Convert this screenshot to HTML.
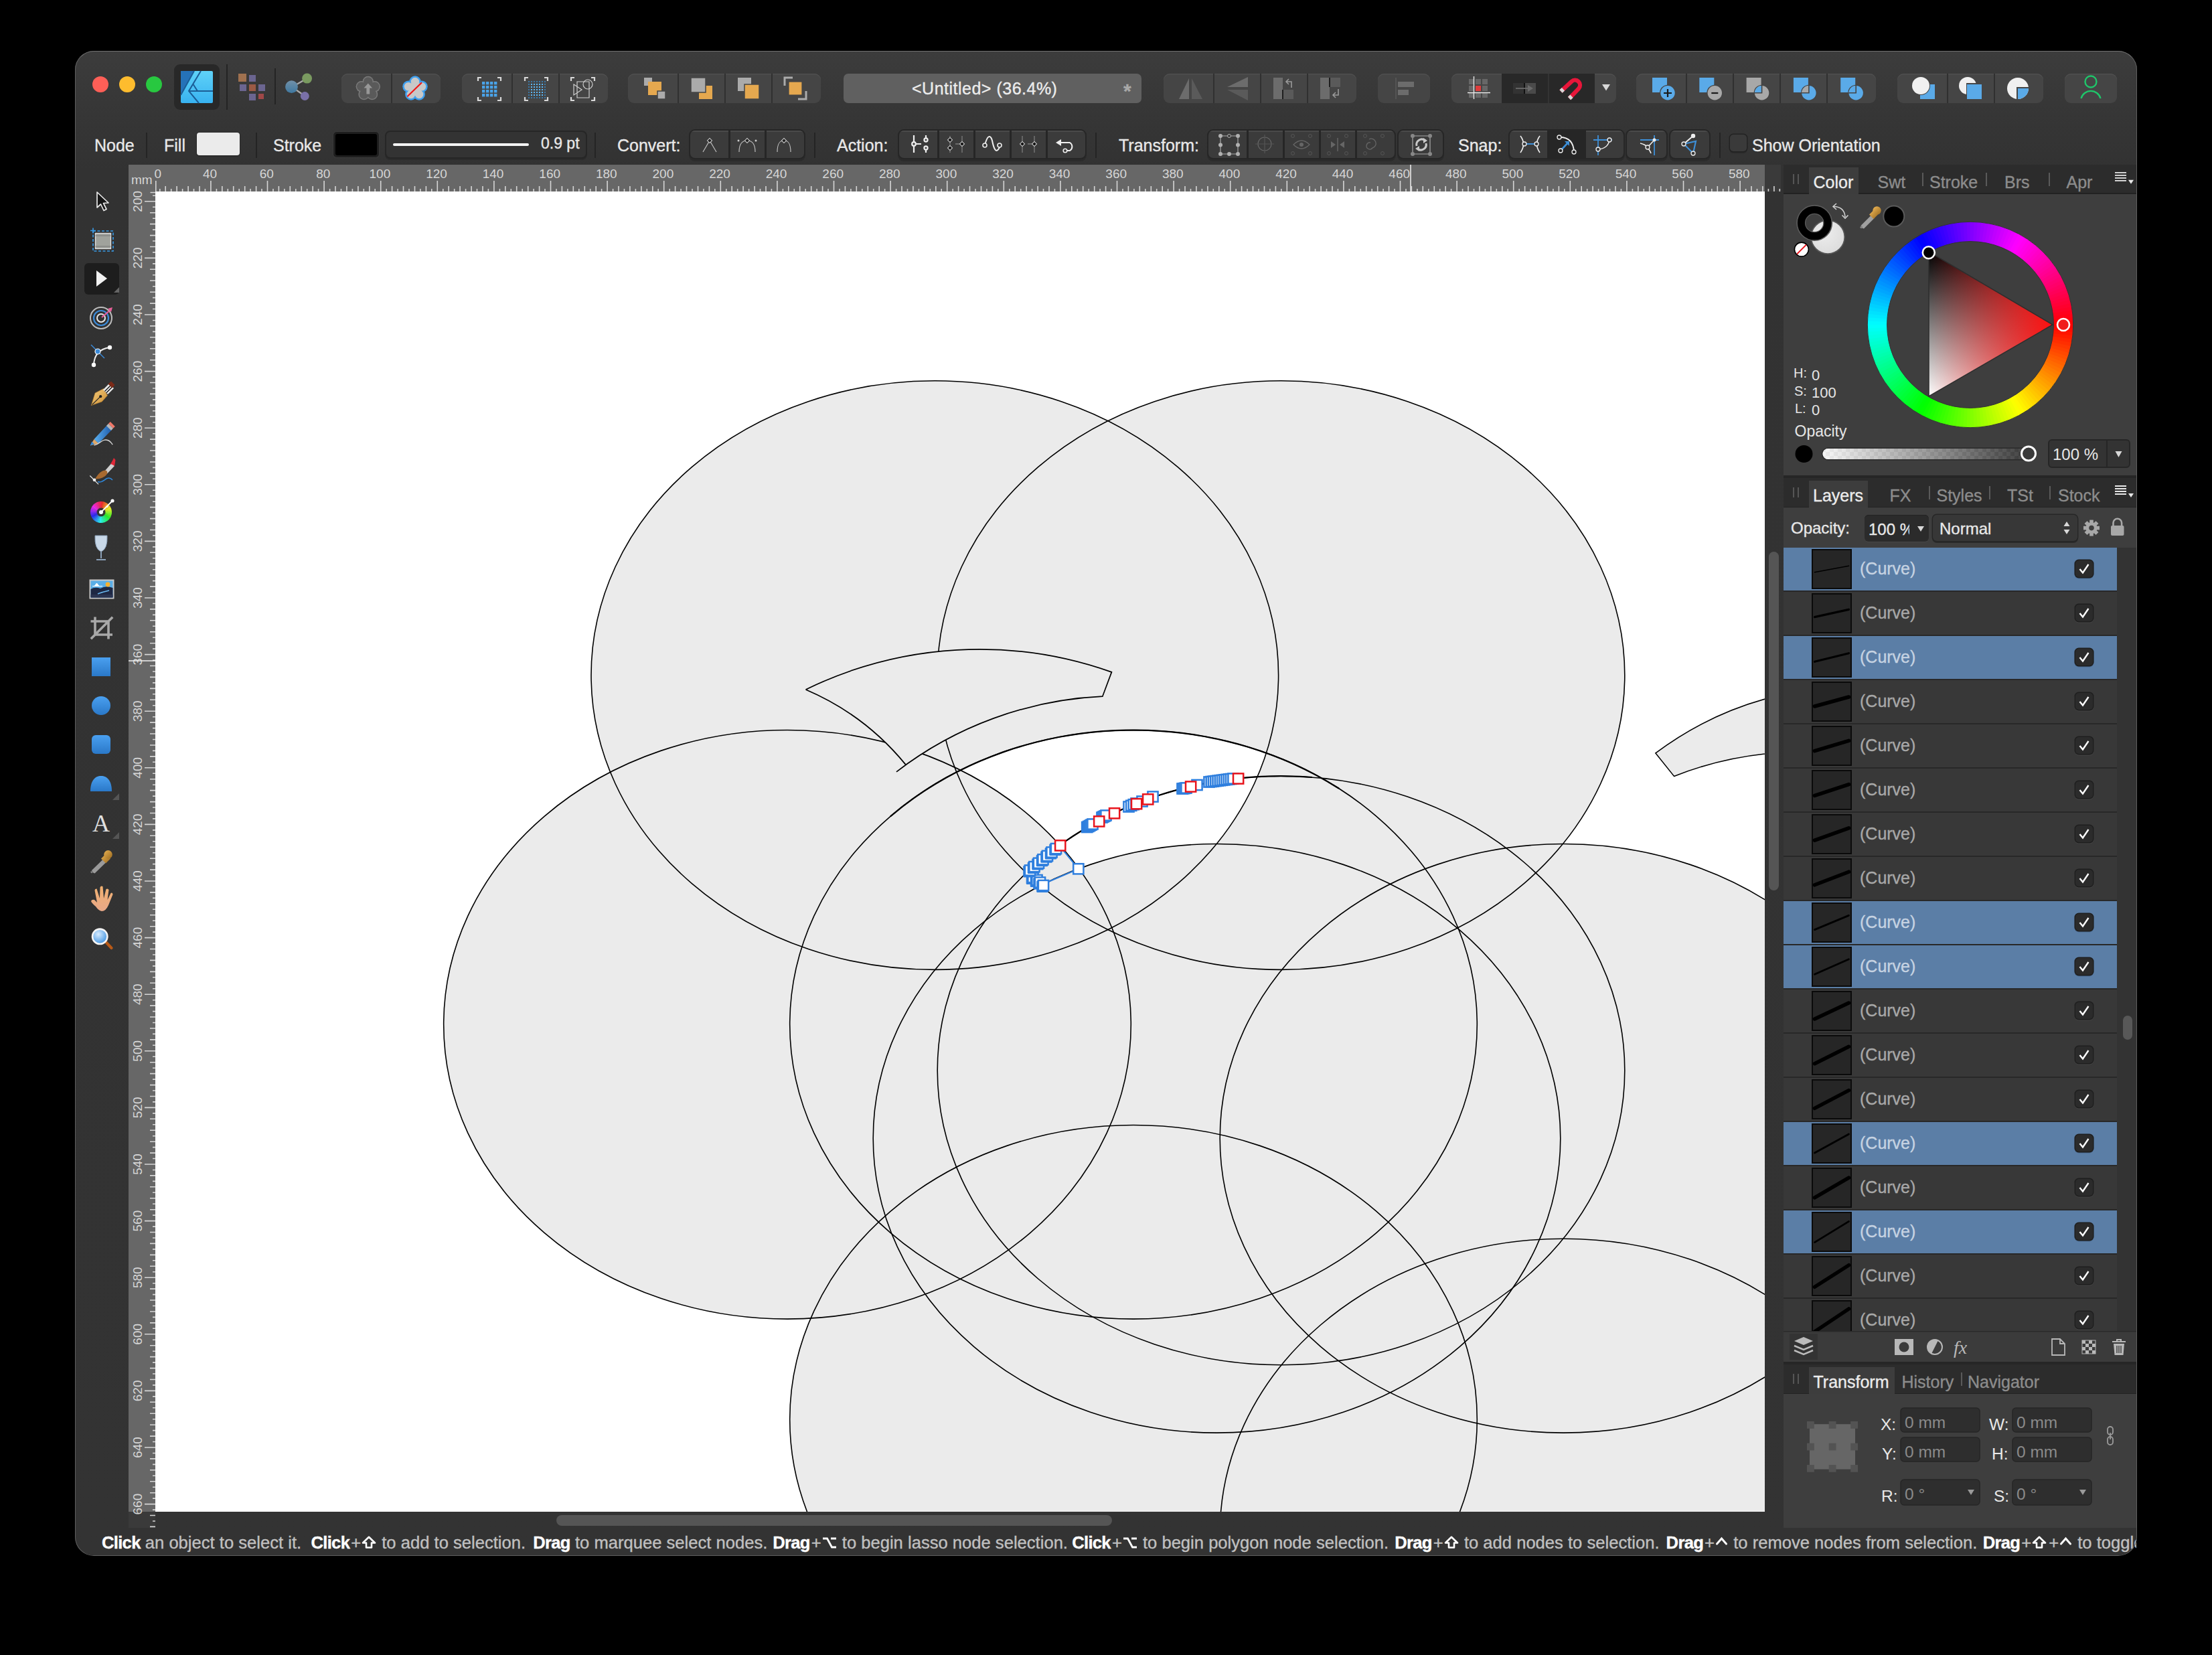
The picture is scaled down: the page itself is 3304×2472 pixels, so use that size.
<!DOCTYPE html>
<html><head><meta charset="utf-8">
<style>
*{box-sizing:border-box;margin:0;padding:0}
html,body{width:3304px;height:2472px;background:#000;overflow:hidden;font-family:"Liberation Sans",sans-serif}
.a{position:absolute}
div.a,div.lbl{-webkit-text-stroke:0.35px currentColor}
svg text{stroke:currentColor;stroke-width:0}

#win{position:absolute;left:112px;top:76px;width:3080px;height:2247px;background:linear-gradient(#3c3c3c 0px,#353535 110px,#323232 180px,#333 2247px);border-radius:28px;overflow:hidden}
#winb{position:absolute;left:112px;top:76px;width:3080px;height:2247px;border-radius:28px;border:1.5px solid #5e5e5e;border-top-color:#707070;height:2248px;pointer-events:none}
.grp{position:absolute;background:#454545;border-radius:9px;top:110px;height:44px;overflow:hidden;box-shadow:inset 0 1.5px 0 #4f4f4f}
.dv{position:absolute;top:0;width:2px;height:100%;background:#303030}
b{color:#fff;font-weight:bold}
.st{top:6px;white-space:nowrap;font-size:25.6px;line-height:32px;color:#c0c0c0}
.st b{letter-spacing:-0.7px}
.pl{margin-left:2px}
.lbl{position:absolute;color:#e8e8e8;font-size:25px;top:202px;line-height:30px;white-space:nowrap}
.sep{position:absolute;width:2px;background:#242424;top:198px;height:38px}
.cg{position:absolute;top:195px;height:41px;background:#3b3b3b;border-radius:7px;box-shadow:0 0 0 2px #262626, 0 3px 0 2px #2b2b2b;overflow:hidden}
.cdv{position:absolute;top:0;width:3px;height:100%;background:#262626}
svg.i{position:absolute;overflow:visible}

</style></head><body>
<div id="win"></div>
<svg class="i" style="left:130px;top:106px" width="120" height="40" viewBox="130 106 120 40"><circle cx="150" cy="126" r="12" fill="#fe5f57"/><circle cx="190" cy="126" r="12" fill="#febc2e"/><circle cx="230" cy="126" r="12" fill="#28c840"/></svg>
<div class="a" style="left:260px;top:96px;width:68px;height:68px;background:#282828;border-radius:9px"></div>
<svg class="i" style="left:270px;top:106px" width="48" height="48" viewBox="270 106 48 48"><defs><linearGradient id="ag" x1="0" y1="0" x2="0" y2="1"><stop offset="0" stop-color="#5fd2f8"/><stop offset="1" stop-color="#38b2f0"/></linearGradient></defs>
    <rect x="270" y="106" width="48" height="48" rx="2" fill="url(#ag)"/>
    <path d="M270,106 L290,106 L270,142 Z" fill="#2572b8"/>
    <path d="M290,106 L270,142 M300,106 L282,136 L297,154 M282,136 L318,136 M288,125 L295,136" stroke="#1b5d96" stroke-width="2" fill="none"/></svg>
<div class="a" style="left:338px;top:96px;width:2px;height:68px;background:#242424"></div>
<svg class="i" style="left:350px;top:105px" width="50" height="50" viewBox="350 105 50 50"><rect x="356" y="110" width="12" height="12" fill="#a0714f"/><rect x="372" y="112" width="10" height="10" fill="#6b6590"/>
    <rect x="358" y="126" width="10" height="10" fill="#6b6590"/><rect x="372" y="126" width="10" height="10" fill="#9b5a45"/><rect x="386" y="126" width="10" height="10" fill="#6b6590"/>
    <rect x="372" y="140" width="10" height="10" fill="#6b6590"/><rect x="386" y="140" width="8" height="8" fill="#a04848"/></svg>
<div class="a" style="left:410px;top:102px;width:2px;height:54px;background:#242424"></div>
<svg class="i" style="left:420px;top:105px" width="50" height="50" viewBox="420 105 50 50"><defs><linearGradient id="sg" x1="0" y1="0" x2="0" y2="1"><stop offset="0" stop-color="#7090a8"/><stop offset="1" stop-color="#3f78a0"/></linearGradient></defs>
    <path d="M436,130 L459,117 M436,130 L455,143" stroke="#a8a8a8" stroke-width="2.5"/>
    <circle cx="435.5" cy="129.7" r="9.4" fill="url(#sg)"/><circle cx="458.6" cy="117.1" r="7.5" fill="#7a9a60"/><circle cx="455.3" cy="143.5" r="6.5" fill="#7a70a8"/></svg>
<div class="grp" style="left:510px;width:148px;top:110px;height:44px;"><div class="dv" style="left:74px"></div></div>
<svg class="i" style="left:525px;top:108px" width="120" height="48" viewBox="525 108 120 48"><circle cx="549.8" cy="122.1" r="8.3" fill="#7a7a7a"/><circle cx="559.7" cy="129.3" r="8.3" fill="#7a7a7a"/><circle cx="555.9" cy="140.9" r="8.3" fill="#7a7a7a"/><circle cx="543.7" cy="140.9" r="8.3" fill="#7a7a7a"/><circle cx="539.9" cy="129.3" r="8.3" fill="#7a7a7a"/><circle cx="549.8" cy="132.5" r="11.9" fill="#7a7a7a"/><circle cx="549.8" cy="122.1" r="6.8" fill="#5a5a5a"/><circle cx="559.7" cy="129.3" r="6.8" fill="#5a5a5a"/><circle cx="555.9" cy="140.9" r="6.8" fill="#5a5a5a"/><circle cx="543.7" cy="140.9" r="6.8" fill="#5a5a5a"/><circle cx="539.9" cy="129.3" r="6.8" fill="#5a5a5a"/><circle cx="549.8" cy="132.5" r="10.4" fill="#5a5a5a"/><path d="M549.8,124.5 L543.5,131.5 L547.4,131.5 L547.4,140.5 L552.2,140.5 L552.2,131.5 L556.1,131.5 Z" fill="#989898"/><circle cx="620.0" cy="122.1" r="8.8" fill="#3ea0f0"/><circle cx="629.9" cy="129.3" r="8.8" fill="#3ea0f0"/><circle cx="626.1" cy="140.9" r="8.8" fill="#3ea0f0"/><circle cx="613.9" cy="140.9" r="8.8" fill="#3ea0f0"/><circle cx="610.1" cy="129.3" r="8.8" fill="#3ea0f0"/><circle cx="620" cy="132.5" r="12.4" fill="#3ea0f0"/><circle cx="620.0" cy="122.1" r="6.3" fill="#c8c8c8"/><circle cx="629.9" cy="129.3" r="6.3" fill="#c8c8c8"/><circle cx="626.1" cy="140.9" r="6.3" fill="#c8c8c8"/><circle cx="613.9" cy="140.9" r="6.3" fill="#c8c8c8"/><circle cx="610.1" cy="129.3" r="6.3" fill="#c8c8c8"/><circle cx="620" cy="132.5" r="9.9" fill="#c8c8c8"/><path d="M608.3,144.2 L630,123.2" stroke="#f01818" stroke-width="2.2"/></svg>
<div class="grp" style="left:690px;width:218px;top:110px;height:44px;"><div class="dv" style="left:74px"></div><div class="dv" style="left:144px"></div></div>
<svg class="i" style="left:700px;top:105px" width="200" height="50" viewBox="700 105 200 50"><rect x="720" y="122" width="4.4" height="4.4" fill="#4aa3e8"/><rect x="726" y="122" width="4.4" height="4.4" fill="#4aa3e8"/><rect x="732" y="122" width="4.4" height="4.4" fill="#4aa3e8"/><rect x="738" y="122" width="4.4" height="4.4" fill="#4aa3e8"/><rect x="720" y="128" width="4.4" height="4.4" fill="#4aa3e8"/><rect x="726" y="128" width="4.4" height="4.4" fill="#4aa3e8"/><rect x="732" y="128" width="4.4" height="4.4" fill="#4aa3e8"/><rect x="738" y="128" width="4.4" height="4.4" fill="#4aa3e8"/><rect x="720" y="134" width="4.4" height="4.4" fill="#4aa3e8"/><rect x="726" y="134" width="4.4" height="4.4" fill="#4aa3e8"/><rect x="732" y="134" width="4.4" height="4.4" fill="#4aa3e8"/><rect x="738" y="134" width="4.4" height="4.4" fill="#4aa3e8"/><rect x="720" y="140" width="4.4" height="4.4" fill="#4aa3e8"/><rect x="726" y="140" width="4.4" height="4.4" fill="#4aa3e8"/><rect x="732" y="140" width="4.4" height="4.4" fill="#4aa3e8"/><rect x="738" y="140" width="4.4" height="4.4" fill="#4aa3e8"/><path d="M714,121 L714,116 L719,116" stroke="#d8d8d8" stroke-width="2.2" fill="none"/><path d="M748,121 L748,116 L743,116" stroke="#d8d8d8" stroke-width="2.2" fill="none"/><path d="M714,145 L714,150 L719,150" stroke="#d8d8d8" stroke-width="2.2" fill="none"/><path d="M748,145 L748,150 L743,150" stroke="#d8d8d8" stroke-width="2.2" fill="none"/><path d="M784,121 L784,116 L789,116" stroke="#d8d8d8" stroke-width="2.2" fill="none"/><path d="M818,121 L818,116 L813,116" stroke="#d8d8d8" stroke-width="2.2" fill="none"/><path d="M784,145 L784,150 L789,150" stroke="#d8d8d8" stroke-width="2.2" fill="none"/><path d="M818,145 L818,150 L813,150" stroke="#d8d8d8" stroke-width="2.2" fill="none"/><path d="M853,121 L853,116 L858,116" stroke="#d8d8d8" stroke-width="2.2" fill="none"/><path d="M888,121 L888,116 L883,116" stroke="#d8d8d8" stroke-width="2.2" fill="none"/><path d="M853,145 L853,150 L858,150" stroke="#d8d8d8" stroke-width="2.2" fill="none"/><path d="M888,145 L888,150 L883,150" stroke="#d8d8d8" stroke-width="2.2" fill="none"/><rect x="789" y="121" width="2" height="2" fill="#3a78a8"/><rect x="793" y="121" width="2" height="2" fill="#3a78a8"/><rect x="797" y="121" width="2" height="2" fill="#3a78a8"/><rect x="801" y="121" width="2" height="2" fill="#3a78a8"/><rect x="805" y="121" width="2" height="2" fill="#3a78a8"/><rect x="809" y="121" width="2" height="2" fill="#3a78a8"/><rect x="813" y="121" width="2" height="2" fill="#3a78a8"/><rect x="789" y="125" width="2" height="2" fill="#3a78a8"/><rect x="793" y="125" width="2" height="2" fill="#5ab8f8"/><rect x="797" y="125" width="2" height="2" fill="#5ab8f8"/><rect x="801" y="125" width="2" height="2" fill="#5ab8f8"/><rect x="805" y="125" width="2" height="2" fill="#5ab8f8"/><rect x="809" y="125" width="2" height="2" fill="#5ab8f8"/><rect x="813" y="125" width="2" height="2" fill="#3a78a8"/><rect x="789" y="129" width="2" height="2" fill="#3a78a8"/><rect x="793" y="129" width="2" height="2" fill="#5ab8f8"/><rect x="797" y="129" width="2" height="2" fill="#5ab8f8"/><rect x="801" y="129" width="2" height="2" fill="#5ab8f8"/><rect x="805" y="129" width="2" height="2" fill="#5ab8f8"/><rect x="809" y="129" width="2" height="2" fill="#5ab8f8"/><rect x="813" y="129" width="2" height="2" fill="#3a78a8"/><rect x="789" y="133" width="2" height="2" fill="#3a78a8"/><rect x="793" y="133" width="2" height="2" fill="#5ab8f8"/><rect x="797" y="133" width="2" height="2" fill="#5ab8f8"/><rect x="801" y="133" width="2" height="2" fill="#5ab8f8"/><rect x="805" y="133" width="2" height="2" fill="#5ab8f8"/><rect x="809" y="133" width="2" height="2" fill="#5ab8f8"/><rect x="813" y="133" width="2" height="2" fill="#3a78a8"/><rect x="789" y="137" width="2" height="2" fill="#3a78a8"/><rect x="793" y="137" width="2" height="2" fill="#5ab8f8"/><rect x="797" y="137" width="2" height="2" fill="#5ab8f8"/><rect x="801" y="137" width="2" height="2" fill="#5ab8f8"/><rect x="805" y="137" width="2" height="2" fill="#5ab8f8"/><rect x="809" y="137" width="2" height="2" fill="#5ab8f8"/><rect x="813" y="137" width="2" height="2" fill="#3a78a8"/><rect x="789" y="141" width="2" height="2" fill="#3a78a8"/><rect x="793" y="141" width="2" height="2" fill="#5ab8f8"/><rect x="797" y="141" width="2" height="2" fill="#5ab8f8"/><rect x="801" y="141" width="2" height="2" fill="#5ab8f8"/><rect x="805" y="141" width="2" height="2" fill="#5ab8f8"/><rect x="809" y="141" width="2" height="2" fill="#5ab8f8"/><rect x="813" y="141" width="2" height="2" fill="#3a78a8"/><rect x="789" y="145" width="2" height="2" fill="#3a78a8"/><rect x="793" y="145" width="2" height="2" fill="#3a78a8"/><rect x="797" y="145" width="2" height="2" fill="#3a78a8"/><rect x="801" y="145" width="2" height="2" fill="#3a78a8"/><rect x="805" y="145" width="2" height="2" fill="#3a78a8"/><rect x="809" y="145" width="2" height="2" fill="#3a78a8"/><rect x="813" y="145" width="2" height="2" fill="#3a78a8"/><path d="M857,126 L869,134 L857,142 Z M862,122 h18 v24 h-18 Z" stroke="#cfcfcf" stroke-width="1.2" fill="none"/><circle cx="878" cy="126" r="7" stroke="#cfcfcf" stroke-width="1.2" fill="none"/></svg>
<div class="grp" style="left:938px;width:288px;top:110px;height:44px;"><div class="dv" style="left:74px"></div><div class="dv" style="left:144px"></div><div class="dv" style="left:214px"></div></div>
<svg class="i" style="left:950px;top:105px" width="270" height="50" viewBox="950 105 270 50"><rect x="962" y="116" width="12" height="12" fill="#ababab"/><rect x="968" y="122" width="20" height="20" fill="#e5a84f"/><rect x="982" y="136" width="12" height="12" fill="#ababab" stroke="#454545" stroke-width="1.5"/>
    <rect x="1044" y="128" width="20" height="20" fill="#e5a84f"/><rect x="1032" y="116" width="22" height="22" fill="#ababab" stroke="#454545" stroke-width="1.5"/>
    <rect x="1102" y="116" width="20" height="20" fill="#ababab"/><rect x="1112" y="126" width="22" height="22" fill="#e5a84f" stroke="#454545" stroke-width="1.5"/>
    <path d="M1172,128 v-12 h12" stroke="#ababab" stroke-width="3" fill="none"/><path d="M1204,136 v12 h-12" stroke="#ababab" stroke-width="3" fill="none"/><rect x="1178" y="122" width="20" height="20" fill="#e5a84f" stroke="#454545" stroke-width="1.2"/></svg>
<div class="a" style="left:1260px;top:110px;width:445px;height:44px;background:#606060;border-radius:7px"></div>
<div class="a" style="left:1362px;top:110px;height:44px;line-height:44px;color:#ececec;font-size:25px;letter-spacing:0.5px;white-space:nowrap">&lt;Untitled&gt; (36.4%)</div>
<div class="a" style="left:1678px;top:117px;width:20px;height:30px;color:#a8a8a8;font-size:30px;font-weight:bold;line-height:38px">*</div>
<div class="grp" style="left:1738px;width:288px;top:110px;height:44px;"><div class="dv" style="left:74px"></div><div class="dv" style="left:144px"></div><div class="dv" style="left:214px"></div></div>
<svg class="i" style="left:1750px;top:105px" width="270" height="50" viewBox="1750 105 270 50"><path d="M1776,117 L1776,148 L1761,148 Z" fill="#6c6c6c"/><path d="M1780,117 L1780,148 L1796,148 Z" fill="#5a5a5a"/>
    <path d="M1864,115 L1864,130 L1833,130 Z" fill="#6c6c6c"/><path d="M1864,134 L1864,150 L1833,134 Z" fill="#5a5a5a"/>
    <rect x="1902" y="116" width="14" height="32" fill="#6c6c6c"/><rect x="1916" y="134" width="16" height="14" fill="#5a5a5a"/><path d="M1916,134 v14" stroke="#1e1e1e" stroke-width="2"/><path d="M1929,131 v-9 h-7 M1925,118 l-4,4 l4,4" stroke="#9a9a9a" stroke-width="1.6" fill="none"/>
    <rect x="1972" y="116" width="14" height="32" fill="#6c6c6c"/><rect x="1986" y="116" width="16" height="14" fill="#5a5a5a"/><path d="M1986,116 v14" stroke="#1e1e1e" stroke-width="2"/><path d="M1999,133 v9 h-7 M1995,138 l-4,4 l4,4" stroke="#9a9a9a" stroke-width="1.6" fill="none"/></svg>
<div class="grp" style="left:2058px;width:78px;top:110px;height:44px;"></div>
<svg class="i" style="left:2080px;top:110px" width="40" height="40" viewBox="2080 110 40 40"><path d="M2085,116 v32" stroke="#5a5a5a" stroke-width="1.5"/><rect x="2088" y="122" width="24" height="8" fill="#6c6c6c"/><rect x="2088" y="134" width="16" height="8" fill="#6c6c6c"/></svg>
<div class="grp" style="left:2168px;width:246px;top:110px;height:44px;"></div>
<div class="a" style="left:2243px;top:110px;width:139px;height:44px;background:#282828"></div><div class="a" style="left:2312px;top:110px;width:2px;height:44px;background:#333"></div>
<svg class="i" style="left:2180px;top:105px" width="240" height="50" viewBox="2180 105 240 50"><rect x="2194" y="118" width="8" height="8" fill="#676767"/><rect x="2204" y="118" width="8" height="8" fill="#676767"/><rect x="2214" y="118" width="8" height="8" fill="#676767"/><rect x="2194" y="128" width="8" height="8" fill="#676767"/><rect x="2204" y="128" width="8" height="8" fill="#e03c3c"/><rect x="2214" y="128" width="8" height="8" fill="#676767"/><rect x="2194" y="138" width="8" height="8" fill="#676767"/><rect x="2204" y="138" width="8" height="8" fill="#676767"/><rect x="2214" y="138" width="8" height="8" fill="#676767"/><path d="M2201.5,114 v34 M2192,138.5 h34" stroke="#e8e8e8" stroke-width="1.4"/><rect x="2260" y="124" width="16" height="16" fill="#333"/><rect x="2278" y="124" width="16" height="16" fill="#4a4a4a"/><path d="M2277,124 v16" stroke="#111" stroke-width="2"/><path d="M2264,132 h18" stroke="#6a6a6a" stroke-width="1.8"/><path d="M2282,127 l8,5 l-8,5 Z" fill="#6a6a6a"/><path d="M2331.5,136.5 L2347.4,121.7 A7.5,7.5 0 0 1 2358,132.3 L2344,147" stroke="#e8163a" stroke-width="6.2" fill="none"/><path d="M2331.5,136.5 L2335,133.2 M2344,147 L2347.5,143.7" stroke="#d8d8d8" stroke-width="6.2"/><path d="M2393,126 h12 l-6,9.5 Z" fill="#d8d8d8"/></svg>
<div class="grp" style="left:2444px;width:358px;top:110px;height:44px;"><div class="dv" style="left:74px"></div><div class="dv" style="left:144px"></div><div class="dv" style="left:214px"></div><div class="dv" style="left:284px"></div></div>
<svg class="i" style="left:2450px;top:105px" width="350" height="50" viewBox="2450 105 350 50"><rect x="2468.0" y="116" width="22" height="22" fill="#5aaae8"/><circle cx="2491.0" cy="138.8" r="12" fill="#454545"/><circle cx="2491.0" cy="138.8" r="10.7" fill="#5aaae8"/><path d="M2485.0,139 h12 M2491.0,133 v12" stroke="#1a1a1a" stroke-width="2.2"/><rect x="2538.3" y="116" width="22" height="22" fill="#5aaae8"/><circle cx="2561.3" cy="138.8" r="12" fill="#454545"/><circle cx="2561.3" cy="138.8" r="10.7" fill="#a8a8a8"/><path d="M2556.3,139 h10" stroke="#1a1a1a" stroke-width="2.2"/><rect x="2608.6" y="116" width="22" height="22" fill="#a8a8a8"/><circle cx="2631.6" cy="138.8" r="12" fill="#454545"/><circle cx="2631.6" cy="138.8" r="10.7" fill="#a8a8a8"/><path d="M2620.9,138.8 A10.7,10.7 0 0 1 2631.6,128.1 L2631.6,138.8 Z" fill="#5aaae8"/><path d="M2620.6,138.8 h11 v-11" stroke="#454545" stroke-width="1.6" fill="none"/><rect x="2678.9" y="116" width="22" height="22" fill="#5aaae8"/><circle cx="2701.9" cy="138.8" r="12" fill="#454545"/><circle cx="2701.9" cy="138.8" r="10.7" fill="#5aaae8"/><path d="M2691.2,138.8 A10.7,10.7 0 0 1 2701.9,128.1 L2701.9,138.8 Z" fill="#a8a8a8"/><path d="M2690.9,138.8 h11 v-11" stroke="#454545" stroke-width="1.6" fill="none"/><rect x="2749.2" y="116" width="22" height="22" fill="#5aaae8"/><circle cx="2772.2" cy="138.8" r="12" fill="#454545"/><circle cx="2772.2" cy="138.8" r="10.7" fill="#5aaae8"/><path d="M2761.5,138.8 A10.7,10.7 0 0 1 2772.2,128.1 L2772.2,138.8 Z" fill="#5aaae8"/><path d="M2761.2,138.8 h11 v-11" stroke="#454545" stroke-width="1.6" fill="none"/></svg>
<div class="grp" style="left:2834px;width:218px;top:110px;height:44px;"><div class="dv" style="left:74px"></div><div class="dv" style="left:144px"></div></div>
<svg class="i" style="left:2850px;top:105px" width="200" height="50" viewBox="2850 105 200 50"><rect x="2868" y="126" width="22" height="22" fill="#5aaae8"/><circle cx="2869" cy="128" r="14" fill="#454545"/><circle cx="2869" cy="128" r="13" fill="#f0f0f0"/>
    <circle cx="2939" cy="128" r="13" fill="#f0f0f0"/><rect x="2937" y="124" width="26" height="26" fill="#454545"/><rect x="2938" y="126" width="22" height="22" fill="#5aaae8"/>
    <circle cx="3014" cy="132" r="16" fill="#f0f0f0"/><path d="M3013,148 L3013,131 L3030,131 A16,16 0 0 1 3013,148 Z" fill="#5aaae8"/><path d="M3013,148 V131 H3030" stroke="#454545" stroke-width="2" fill="none"/></svg>
<div class="grp" style="left:3084px;width:78px;top:110px;height:44px;"></div>
<svg class="i" style="left:3100px;top:110px" width="50" height="44" viewBox="3100 110 50 44"><circle cx="3123" cy="122" r="8.5" stroke="#1fc66a" stroke-width="2.4" fill="none"/><path d="M3108.5,147 A15,15 0 0 1 3137.5,147" stroke="#1fc66a" stroke-width="2.4" fill="none"/></svg><div class="lbl" style="left:141px;top:202px">Node</div>
<div class="sep" style="left:218px"></div>
<div class="lbl" style="left:245px;top:202px">Fill</div>
<div class="a" style="left:293px;top:197px;width:66px;height:37px;background:#2a2a2a;border-radius:5px"></div><div class="a" style="left:294px;top:198px;width:64px;height:34px;background:#ebebeb;border-radius:4px"></div>
<div class="sep" style="left:382px"></div>
<div class="lbl" style="left:408px;top:202px">Stroke</div>
<div class="a" style="left:498px;top:197px;width:68px;height:38px;background:#1e1e1e;border-radius:5px;box-shadow:0 0 0 1px #3a3a3a"></div><div class="a" style="left:501px;top:200px;width:62px;height:32px;background:#000;border-radius:3px"></div>
<div class="a" style="left:577px;top:197px;width:298px;height:38px;background:#333;border-radius:6px;box-shadow:0 0 0 2px #262626, 0 2px 0 2px #2b2b2b"></div>
<div class="a" style="left:587px;top:213.5px;width:203px;height:4px;background:#f4f4f4;border-radius:2px"></div>
<div class="lbl" style="left:808px;top:199px;font-size:23px">0.9 pt</div>
<div class="sep" style="left:888px"></div>
<div class="lbl" style="left:922px;top:202px">Convert:</div>
<div class="cg" style="left:1031px;width:170px"><div class="a" style="left:0;right:0;top:0;height:1.5px;background:#4a4a4a"></div><div class="cdv" style="left:56.5px"></div><div class="cdv" style="left:110.5px"></div></div>
<svg class="i" style="left:1040px;top:200px" width="150" height="32" viewBox="1040 200 150 32"><path d="M1050,227 L1060,210 L1070,227" stroke="#bdbdbd" stroke-width="1.2" fill="none"/><rect x="1057.5" y="207.5" width="5" height="5" transform="rotate(45 1060 210)" fill="#222" stroke="#ccc" stroke-width="1"/>
    <path d="M1104,227 C1104,215 1108,210 1116,210 C1124,210 1128,215 1128,227" stroke="#bdbdbd" stroke-width="1.2" fill="none"/><rect x="1113.5" y="207.5" width="5" height="5" transform="rotate(45 1116 210)" fill="#222" stroke="#ccc" stroke-width="1"/><circle cx="1103" cy="210" r="1.5" fill="#ccc"/><circle cx="1129" cy="210" r="1.5" fill="#ccc"/>
    <path d="M1161,227 C1161,215 1164,210 1171,210 C1178,210 1181,215 1181,227" stroke="#bdbdbd" stroke-width="1.2" fill="none"/><rect x="1168.5" y="207.5" width="5" height="5" transform="rotate(45 1171 210)" fill="#222" stroke="#ccc" stroke-width="1"/></svg>
<div class="sep" style="left:1216px"></div>
<div class="lbl" style="left:1250px;top:202px">Action:</div>
<div class="cg" style="left:1343px;width:278px"><div class="a" style="left:0;right:0;top:0;height:1.5px;background:#4a4a4a"></div><div class="cdv" style="left:56.5px"></div><div class="cdv" style="left:110.5px"></div><div class="cdv" style="left:164.5px"></div><div class="cdv" style="left:218.5px"></div></div>
<svg class="i" style="left:1350px;top:198px" width="270" height="36" viewBox="1350 198 270 36"><g stroke="#eee" stroke-width="2.2" fill="none"><path d="M1365,202 v26 M1365,215 h11"/><circle cx="1365" cy="215" r="2.8" fill="#3b3b3b"/><path d="M1383,202 v5 M1383,228 v-5"/><circle cx="1383" cy="209" r="2.6" fill="#3b3b3b"/><circle cx="1383" cy="221" r="2.6" fill="#3b3b3b"/></g>
    <g stroke="#6a6a6a" stroke-width="1.8" fill="none"><path d="M1419,203 v25 M1437,203 v25 M1427,215 h10"/></g><g fill="#111" stroke="#ccc" stroke-width="1"><rect x="1416.5" y="206.5" width="5" height="5" transform="rotate(45 1419 209)"/><rect x="1416.5" y="218.5" width="5" height="5" transform="rotate(45 1419 221)"/><rect x="1434.5" y="212.5" width="5" height="5" transform="rotate(45 1437 215)"/></g>
    <path d="M1471,217 C1475,200 1480,202 1482,210 C1484,220 1487,230 1492,222 L1494,217" stroke="#eee" stroke-width="2" fill="none"/><circle cx="1471" cy="217" r="3" stroke="#eee" stroke-width="1.6" fill="#3b3b3b"/><circle cx="1493" cy="217" r="3" stroke="#eee" stroke-width="1.6" fill="#3b3b3b"/>
    <g stroke="#6a6a6a" stroke-width="1.8" fill="none"><path d="M1527,203 v25 M1545,203 v25 M1535,215 h10"/></g><g fill="#111" stroke="#ccc" stroke-width="1"><rect x="1524.5" y="212.5" width="5" height="5" transform="rotate(45 1527 215)"/><rect x="1542.5" y="212.5" width="5" height="5" transform="rotate(45 1545 215)"/></g>
    <path d="M1584,213 h14 a7,7 0 0 1 0,12 h-6" stroke="#eee" stroke-width="2" fill="none"/><path d="M1577,213 l8,-5 v10 Z" fill="#eee"/><circle cx="1591" cy="225" r="2.8" stroke="#eee" stroke-width="1.6" fill="#3b3b3b"/></svg>
<div class="sep" style="left:1636px"></div>
<div class="lbl" style="left:1671px;top:202px">Transform:</div>
<div class="cg" style="left:1805px;width:278px"><div class="a" style="left:0;right:0;top:0;height:1.5px;background:#4a4a4a"></div><div class="cdv" style="left:56.5px"></div><div class="cdv" style="left:110.5px"></div><div class="cdv" style="left:164.5px"></div><div class="cdv" style="left:218.5px"></div></div>
<div class="cg" style="left:2089px;width:66px"><div class="a" style="left:0;right:0;top:0;height:1.5px;background:#4a4a4a"></div></div>
<svg class="i" style="left:1815px;top:196px" width="330" height="40" viewBox="1815 196 330 40"><path d="M1823,203 h26 v27 h-26 Z" stroke="#aaa" stroke-width="1.2" fill="none"/><g fill="#b0b0b0"><circle cx="1823" cy="203" r="3"/><circle cx="1849" cy="203" r="3"/><circle cx="1823" cy="216.5" r="3"/><circle cx="1849" cy="216.5" r="3"/><circle cx="1823" cy="230" r="3"/><circle cx="1836" cy="230" r="3"/><circle cx="1849" cy="230" r="3"/></g><circle cx="1836" cy="203" r="2.5" fill="#3b3b3b" stroke="#b0b0b0" stroke-width="1"/>
    <circle cx="1889" cy="215" r="10" stroke="#666" stroke-width="1.2" fill="none"/><path d="M1875,215 h28 M1889,201 v28" stroke="#555" stroke-width="1.2"/>
    <g stroke="#555" stroke-width="1" fill="none"><circle cx="1931" cy="203" r="2.5"/><circle cx="1957" cy="203" r="2.5"/><circle cx="1931" cy="229" r="2.5"/><circle cx="1957" cy="229" r="2.5"/></g><path d="M1932,216 Q1944,204 1956,216 Q1944,228 1932,216 Z" stroke="#666" stroke-width="1.2" fill="none"/><circle cx="1944" cy="216" r="3" fill="#666"/>
    <g stroke="#555" stroke-width="1" fill="none"><circle cx="1985" cy="203" r="2.5"/><circle cx="2011" cy="203" r="2.5"/><circle cx="1985" cy="229" r="2.5"/><circle cx="2011" cy="229" r="2.5"/></g><path d="M1998,206 v20" stroke="#666" stroke-width="1.5"/><path d="M1988,211 l7,5 l-7,5 Z M2008,211 l-7,5 l7,5 Z" fill="#666"/>
    <g stroke="#555" stroke-width="1" fill="none"><circle cx="2039" cy="203" r="2.5"/><circle cx="2065" cy="203" r="2.5"/><circle cx="2039" cy="229" r="2.5"/><circle cx="2065" cy="229" r="2.5"/></g><path d="M2045,208 a7,7 0 1 1 5,13 a5,5 0 1 1 -3,-8" stroke="#666" stroke-width="1.3" fill="none"/>
    <path d="M2110,203 h26 v27 h-26 Z" stroke="#aaa" stroke-width="1.2" fill="none"/><g fill="#888"><circle cx="2110" cy="203" r="3"/><circle cx="2136" cy="203" r="3"/><circle cx="2110" cy="230" r="3"/><circle cx="2136" cy="230" r="3"/></g><path d="M2116,218 a8,8 0 0 1 13,-8 M2130,214 a8,8 0 0 1 -13,8" stroke="#c8c8c8" stroke-width="3" fill="none"/><path d="M2126,206 l6,4 l-6,4 Z M2120,218 l-6,4 l6,4 Z" fill="#c8c8c8"/></svg>
<div class="lbl" style="left:2178px;top:202px">Snap:</div>
<div class="cg" style="left:2255px;width:170px"><div class="a" style="left:0;right:0;top:0;height:1.5px;background:#4a4a4a"></div><div class="a" style="left:57px;width:56px;top:0;height:100%;background:#262626"></div><div class="cdv" style="left:55.5px"></div><div class="cdv" style="left:110.5px"></div></div>
<div class="cg" style="left:2430px;width:59px"><div class="a" style="left:0;right:0;top:0;height:1.5px;background:#4a4a4a"></div></div>
<div class="cg" style="left:2495px;width:58px"><div class="a" style="left:0;right:0;top:0;height:1.5px;background:#4a4a4a"></div></div>
<svg class="i" style="left:2260px;top:196px" width="300" height="40" viewBox="2260 196 300 40"><path d="M2271,203 Q2280,215 2271,228 M2300,203 Q2291,215 2300,228" stroke="#eee" stroke-width="1.6" fill="none"/><path d="M2277,215 h17" stroke="#3d8fd8" stroke-width="2"/><circle cx="2277" cy="215" r="3" fill="#3b3b3b" stroke="#eee" stroke-width="1.3"/><circle cx="2295" cy="215" r="3" fill="#3b3b3b" stroke="#eee" stroke-width="1.3"/>
    <path d="M2330,205 Q2350,205 2351,227" stroke="#eee" stroke-width="1.8" fill="none"/><path d="M2331,225 L2343,212" stroke="#3d8fd8" stroke-width="2.6"/><path d="M2337,211 h7 v7 Z" fill="#3d8fd8"/><circle cx="2329" cy="205" r="3" fill="#262626" stroke="#eee" stroke-width="1.3"/><circle cx="2331" cy="225" r="3" fill="#262626" stroke="#eee" stroke-width="1.3"/><circle cx="2351" cy="227" r="3" fill="#262626" stroke="#eee" stroke-width="1.3"/>
    <path d="M2380,209 h28 M2387,202 v30" stroke="#3d8fd8" stroke-width="1.8"/><path d="M2387,223 Q2402,222 2404,209" stroke="#eee" stroke-width="1.6" fill="none"/><circle cx="2387" cy="223" r="3" fill="#3b3b3b" stroke="#eee" stroke-width="1.3"/><circle cx="2404" cy="209" r="3" fill="#3b3b3b" stroke="#eee" stroke-width="1.3"/>
    <path d="M2450,209 h28 M2471,202 v30" stroke="#3d8fd8" stroke-width="1.8"/><path d="M2450,214 Q2458,216 2461,220 L2471,209 M2461,220 Q2465,226 2466,229" stroke="#eee" stroke-width="1.6" fill="none"/><circle cx="2461" cy="220" r="3" fill="#3b3b3b" stroke="#eee" stroke-width="1.3"/><circle cx="2471" cy="209" r="2.5" fill="#eee"/>
    <path d="M2515,215 L2533,211 L2529,229 Z" stroke="#3d8fd8" stroke-width="2.2" fill="none"/><path d="M2515,215 L2529,203" stroke="#eee" stroke-width="2"/><circle cx="2529" cy="203" r="3.2" fill="#eee"/><circle cx="2515" cy="215" r="3" fill="#3b3b3b" stroke="#eee" stroke-width="1.3"/><circle cx="2529" cy="229" r="3" fill="#3b3b3b" stroke="#eee" stroke-width="1.3"/></svg>
<div class="sep" style="left:2568px"></div>
<div class="a" style="left:2584px;top:201px;width:25px;height:25px;background:#3a3a3a;border-radius:5px;box-shadow:0 0 0 1.5px #222, 0 2px 0 1px #2a2a2a"></div>
<div class="lbl" style="left:2617px;top:202px">Show Orientation</div><div class="a" style="left:192px;top:246px;width:2444px;height:40px;background:#676767"></div>
<div class="a" style="left:192px;top:286px;width:40px;height:1972px;background:#676767"></div>
<div class="a" style="left:192px;top:2258px;width:40px;height:24px;background:#3a3a3a"></div><div class="a" style="left:2636px;top:246px;width:24px;height:40px;background:#3a3a3a"></div>
<svg class="a" style="left:0;top:0" width="3304" height="2472" viewBox="0 0 3304 2472"><defs><clipPath id="rc"><rect x="192" y="246" width="2468" height="2036"/></clipPath></defs><g clip-path="url(#rc)"><path d="M238.8,282 V286 M247.2,278 V286 M255.7,282 V286 M264.1,278 V286 M272.6,282 V286 M281.1,278 V286 M289.5,282 V286 M298.0,278 V286 M306.4,282 V286 M314.9,270 V286 M323.4,282 V286 M331.8,278 V286 M340.3,282 V286 M348.7,278 V286 M357.2,282 V286 M365.7,278 V286 M374.1,282 V286 M382.6,278 V286 M391.0,282 V286 M399.5,270 V286 M408.0,282 V286 M416.4,278 V286 M424.9,282 V286 M433.3,278 V286 M441.8,282 V286 M450.3,278 V286 M458.7,282 V286 M467.2,278 V286 M475.6,282 V286 M484.1,270 V286 M492.6,282 V286 M501.0,278 V286 M509.5,282 V286 M517.9,278 V286 M526.4,282 V286 M534.9,278 V286 M543.3,282 V286 M551.8,278 V286 M560.2,282 V286 M568.7,270 V286 M577.2,282 V286 M585.6,278 V286 M594.1,282 V286 M602.5,278 V286 M611.0,282 V286 M619.5,278 V286 M627.9,282 V286 M636.4,278 V286 M644.8,282 V286 M653.3,270 V286 M661.8,282 V286 M670.2,278 V286 M678.7,282 V286 M687.1,278 V286 M695.6,282 V286 M704.1,278 V286 M712.5,282 V286 M721.0,278 V286 M729.4,282 V286 M737.9,270 V286 M746.4,282 V286 M754.8,278 V286 M763.3,282 V286 M771.7,278 V286 M780.2,282 V286 M788.7,278 V286 M797.1,282 V286 M805.6,278 V286 M814.0,282 V286 M822.5,270 V286 M831.0,282 V286 M839.4,278 V286 M847.9,282 V286 M856.3,278 V286 M864.8,282 V286 M873.3,278 V286 M881.7,282 V286 M890.2,278 V286 M898.6,282 V286 M907.1,270 V286 M915.6,282 V286 M924.0,278 V286 M932.5,282 V286 M940.9,278 V286 M949.4,282 V286 M957.9,278 V286 M966.3,282 V286 M974.8,278 V286 M983.2,282 V286 M991.7,270 V286 M1000.2,282 V286 M1008.6,278 V286 M1017.1,282 V286 M1025.5,278 V286 M1034.0,282 V286 M1042.5,278 V286 M1050.9,282 V286 M1059.4,278 V286 M1067.8,282 V286 M1076.3,270 V286 M1084.8,282 V286 M1093.2,278 V286 M1101.7,282 V286 M1110.1,278 V286 M1118.6,282 V286 M1127.1,278 V286 M1135.5,282 V286 M1144.0,278 V286 M1152.4,282 V286 M1160.9,270 V286 M1169.4,282 V286 M1177.8,278 V286 M1186.3,282 V286 M1194.7,278 V286 M1203.2,282 V286 M1211.7,278 V286 M1220.1,282 V286 M1228.6,278 V286 M1237.0,282 V286 M1245.5,270 V286 M1254.0,282 V286 M1262.4,278 V286 M1270.9,282 V286 M1279.3,278 V286 M1287.8,282 V286 M1296.3,278 V286 M1304.7,282 V286 M1313.2,278 V286 M1321.6,282 V286 M1330.1,270 V286 M1338.6,282 V286 M1347.0,278 V286 M1355.5,282 V286 M1363.9,278 V286 M1372.4,282 V286 M1380.9,278 V286 M1389.3,282 V286 M1397.8,278 V286 M1406.2,282 V286 M1414.7,270 V286 M1423.2,282 V286 M1431.6,278 V286 M1440.1,282 V286 M1448.5,278 V286 M1457.0,282 V286 M1465.5,278 V286 M1473.9,282 V286 M1482.4,278 V286 M1490.8,282 V286 M1499.3,270 V286 M1507.8,282 V286 M1516.2,278 V286 M1524.7,282 V286 M1533.1,278 V286 M1541.6,282 V286 M1550.1,278 V286 M1558.5,282 V286 M1567.0,278 V286 M1575.4,282 V286 M1583.9,270 V286 M1592.4,282 V286 M1600.8,278 V286 M1609.3,282 V286 M1617.7,278 V286 M1626.2,282 V286 M1634.7,278 V286 M1643.1,282 V286 M1651.6,278 V286 M1660.0,282 V286 M1668.5,270 V286 M1677.0,282 V286 M1685.4,278 V286 M1693.9,282 V286 M1702.3,278 V286 M1710.8,282 V286 M1719.3,278 V286 M1727.7,282 V286 M1736.2,278 V286 M1744.6,282 V286 M1753.1,270 V286 M1761.6,282 V286 M1770.0,278 V286 M1778.5,282 V286 M1786.9,278 V286 M1795.4,282 V286 M1803.9,278 V286 M1812.3,282 V286 M1820.8,278 V286 M1829.2,282 V286 M1837.7,270 V286 M1846.2,282 V286 M1854.6,278 V286 M1863.1,282 V286 M1871.5,278 V286 M1880.0,282 V286 M1888.5,278 V286 M1896.9,282 V286 M1905.4,278 V286 M1913.8,282 V286 M1922.3,270 V286 M1930.8,282 V286 M1939.2,278 V286 M1947.7,282 V286 M1956.1,278 V286 M1964.6,282 V286 M1973.1,278 V286 M1981.5,282 V286 M1990.0,278 V286 M1998.4,282 V286 M2006.9,270 V286 M2015.4,282 V286 M2023.8,278 V286 M2032.3,282 V286 M2040.7,278 V286 M2049.2,282 V286 M2057.7,278 V286 M2066.1,282 V286 M2074.6,278 V286 M2083.0,282 V286 M2091.5,270 V286 M2100.0,282 V286 M2108.4,278 V286 M2116.9,282 V286 M2125.3,278 V286 M2133.8,282 V286 M2142.3,278 V286 M2150.7,282 V286 M2159.2,278 V286 M2167.6,282 V286 M2176.1,270 V286 M2184.6,282 V286 M2193.0,278 V286 M2201.5,282 V286 M2209.9,278 V286 M2218.4,282 V286 M2226.9,278 V286 M2235.3,282 V286 M2243.8,278 V286 M2252.2,282 V286 M2260.7,270 V286 M2269.2,282 V286 M2277.6,278 V286 M2286.1,282 V286 M2294.5,278 V286 M2303.0,282 V286 M2311.5,278 V286 M2319.9,282 V286 M2328.4,278 V286 M2336.8,282 V286 M2345.3,270 V286 M2353.8,282 V286 M2362.2,278 V286 M2370.7,282 V286 M2379.1,278 V286 M2387.6,282 V286 M2396.1,278 V286 M2404.5,282 V286 M2413.0,278 V286 M2421.4,282 V286 M2429.9,270 V286 M2438.4,282 V286 M2446.8,278 V286 M2455.3,282 V286 M2463.7,278 V286 M2472.2,282 V286 M2480.7,278 V286 M2489.1,282 V286 M2497.6,278 V286 M2506.0,282 V286 M2514.5,270 V286 M2523.0,282 V286 M2531.4,278 V286 M2539.9,282 V286 M2548.3,278 V286 M2556.8,282 V286 M2565.3,278 V286 M2573.7,282 V286 M2582.2,278 V286 M2590.6,282 V286 M2599.1,270 V286 M2607.6,282 V286 M2616.0,278 V286 M2624.5,282 V286 M2632.9,278 V286 M2641.4,282 V286 M2649.9,278 V286 M2658.3,282 V286 M232.8,270 V286" stroke="#d6d6d6" stroke-width="1.6"/><g fill="#d6d6d6" font-size="19" font-family="Liberation Sans"><text x="235.7" y="266.3" text-anchor="middle">0</text><text x="313.6" y="266.3" text-anchor="middle">40</text><text x="398.2" y="266.3" text-anchor="middle">60</text><text x="482.8" y="266.3" text-anchor="middle">80</text><text x="567.4" y="266.3" text-anchor="middle">100</text><text x="652.0" y="266.3" text-anchor="middle">120</text><text x="736.6" y="266.3" text-anchor="middle">140</text><text x="821.2" y="266.3" text-anchor="middle">160</text><text x="905.8" y="266.3" text-anchor="middle">180</text><text x="990.4" y="266.3" text-anchor="middle">200</text><text x="1075.0" y="266.3" text-anchor="middle">220</text><text x="1159.6" y="266.3" text-anchor="middle">240</text><text x="1244.2" y="266.3" text-anchor="middle">260</text><text x="1328.8" y="266.3" text-anchor="middle">280</text><text x="1413.4" y="266.3" text-anchor="middle">300</text><text x="1498.0" y="266.3" text-anchor="middle">320</text><text x="1582.6" y="266.3" text-anchor="middle">340</text><text x="1667.2" y="266.3" text-anchor="middle">360</text><text x="1751.8" y="266.3" text-anchor="middle">380</text><text x="1836.4" y="266.3" text-anchor="middle">400</text><text x="1921.0" y="266.3" text-anchor="middle">420</text><text x="2005.6" y="266.3" text-anchor="middle">440</text><text x="2090.2" y="266.3" text-anchor="middle">460</text><text x="2174.8" y="266.3" text-anchor="middle">480</text><text x="2259.4" y="266.3" text-anchor="middle">500</text><text x="2344.0" y="266.3" text-anchor="middle">520</text><text x="2428.6" y="266.3" text-anchor="middle">540</text><text x="2513.2" y="266.3" text-anchor="middle">560</text><text x="2597.8" y="266.3" text-anchor="middle">580</text></g><text x="196" y="274.5" fill="#d6d6d6" font-size="19" font-family="Liberation Sans">mm</text><path d="M228,292.3 H232 M216,300.8 H232 M228,309.3 H232 M224,317.7 H232 M228,326.2 H232 M224,334.6 H232 M228,343.1 H232 M224,351.6 H232 M228,360.0 H232 M224,368.5 H232 M228,376.9 H232 M216,385.4 H232 M228,393.9 H232 M224,402.3 H232 M228,410.8 H232 M224,419.2 H232 M228,427.7 H232 M224,436.2 H232 M228,444.6 H232 M224,453.1 H232 M228,461.5 H232 M216,470.0 H232 M228,478.5 H232 M224,486.9 H232 M228,495.4 H232 M224,503.8 H232 M228,512.3 H232 M224,520.8 H232 M228,529.2 H232 M224,537.7 H232 M228,546.1 H232 M216,554.6 H232 M228,563.1 H232 M224,571.5 H232 M228,580.0 H232 M224,588.4 H232 M228,596.9 H232 M224,605.4 H232 M228,613.8 H232 M224,622.3 H232 M228,630.7 H232 M216,639.2 H232 M228,647.7 H232 M224,656.1 H232 M228,664.6 H232 M224,673.0 H232 M228,681.5 H232 M224,690.0 H232 M228,698.4 H232 M224,706.9 H232 M228,715.3 H232 M216,723.8 H232 M228,732.3 H232 M224,740.7 H232 M228,749.2 H232 M224,757.6 H232 M228,766.1 H232 M224,774.6 H232 M228,783.0 H232 M224,791.5 H232 M228,799.9 H232 M216,808.4 H232 M228,816.9 H232 M224,825.3 H232 M228,833.8 H232 M224,842.2 H232 M228,850.7 H232 M224,859.2 H232 M228,867.6 H232 M224,876.1 H232 M228,884.5 H232 M216,893.0 H232 M228,901.5 H232 M224,909.9 H232 M228,918.4 H232 M224,926.8 H232 M228,935.3 H232 M224,943.8 H232 M228,952.2 H232 M224,960.7 H232 M228,969.1 H232 M216,977.6 H232 M228,986.1 H232 M224,994.5 H232 M228,1003.0 H232 M224,1011.4 H232 M228,1019.9 H232 M224,1028.4 H232 M228,1036.8 H232 M224,1045.3 H232 M228,1053.7 H232 M216,1062.2 H232 M228,1070.7 H232 M224,1079.1 H232 M228,1087.6 H232 M224,1096.0 H232 M228,1104.5 H232 M224,1113.0 H232 M228,1121.4 H232 M224,1129.9 H232 M228,1138.3 H232 M216,1146.8 H232 M228,1155.3 H232 M224,1163.7 H232 M228,1172.2 H232 M224,1180.6 H232 M228,1189.1 H232 M224,1197.6 H232 M228,1206.0 H232 M224,1214.5 H232 M228,1222.9 H232 M216,1231.4 H232 M228,1239.9 H232 M224,1248.3 H232 M228,1256.8 H232 M224,1265.2 H232 M228,1273.7 H232 M224,1282.2 H232 M228,1290.6 H232 M224,1299.1 H232 M228,1307.5 H232 M216,1316.0 H232 M228,1324.5 H232 M224,1332.9 H232 M228,1341.4 H232 M224,1349.8 H232 M228,1358.3 H232 M224,1366.8 H232 M228,1375.2 H232 M224,1383.7 H232 M228,1392.1 H232 M216,1400.6 H232 M228,1409.1 H232 M224,1417.5 H232 M228,1426.0 H232 M224,1434.4 H232 M228,1442.9 H232 M224,1451.4 H232 M228,1459.8 H232 M224,1468.3 H232 M228,1476.7 H232 M216,1485.2 H232 M228,1493.7 H232 M224,1502.1 H232 M228,1510.6 H232 M224,1519.0 H232 M228,1527.5 H232 M224,1536.0 H232 M228,1544.4 H232 M224,1552.9 H232 M228,1561.3 H232 M216,1569.8 H232 M228,1578.3 H232 M224,1586.7 H232 M228,1595.2 H232 M224,1603.6 H232 M228,1612.1 H232 M224,1620.6 H232 M228,1629.0 H232 M224,1637.5 H232 M228,1645.9 H232 M216,1654.4 H232 M228,1662.9 H232 M224,1671.3 H232 M228,1679.8 H232 M224,1688.2 H232 M228,1696.7 H232 M224,1705.2 H232 M228,1713.6 H232 M224,1722.1 H232 M228,1730.5 H232 M216,1739.0 H232 M228,1747.5 H232 M224,1755.9 H232 M228,1764.4 H232 M224,1772.8 H232 M228,1781.3 H232 M224,1789.8 H232 M228,1798.2 H232 M224,1806.7 H232 M228,1815.1 H232 M216,1823.6 H232 M228,1832.1 H232 M224,1840.5 H232 M228,1849.0 H232 M224,1857.4 H232 M228,1865.9 H232 M224,1874.4 H232 M228,1882.8 H232 M224,1891.3 H232 M228,1899.7 H232 M216,1908.2 H232 M228,1916.7 H232 M224,1925.1 H232 M228,1933.6 H232 M224,1942.0 H232 M228,1950.5 H232 M224,1959.0 H232 M228,1967.4 H232 M224,1975.9 H232 M228,1984.3 H232 M216,1992.8 H232 M228,2001.3 H232 M224,2009.7 H232 M228,2018.2 H232 M224,2026.6 H232 M228,2035.1 H232 M224,2043.6 H232 M228,2052.0 H232 M224,2060.5 H232 M228,2068.9 H232 M216,2077.4 H232 M228,2085.9 H232 M224,2094.3 H232 M228,2102.8 H232 M224,2111.2 H232 M228,2119.7 H232 M224,2128.2 H232 M228,2136.6 H232 M224,2145.1 H232 M228,2153.5 H232 M216,2162.0 H232 M228,2170.5 H232 M224,2178.9 H232 M228,2187.4 H232 M224,2195.8 H232 M228,2204.3 H232 M224,2212.8 H232 M228,2221.2 H232 M224,2229.7 H232 M228,2238.1 H232 M216,2246.6 H232 M228,2255.1 H232 M224,2263.5 H232 M228,2272.0 H232 M224,2280.4 H232 M224.5,287.5 H232" stroke="#d6d6d6" stroke-width="1.6"/><g fill="#d6d6d6" font-size="19" font-family="Liberation Sans"><text x="0" y="0" transform="translate(211.5 300.8) rotate(-90)" text-anchor="middle">200</text><text x="0" y="0" transform="translate(211.5 385.4) rotate(-90)" text-anchor="middle">220</text><text x="0" y="0" transform="translate(211.5 470.0) rotate(-90)" text-anchor="middle">240</text><text x="0" y="0" transform="translate(211.5 554.6) rotate(-90)" text-anchor="middle">260</text><text x="0" y="0" transform="translate(211.5 639.2) rotate(-90)" text-anchor="middle">280</text><text x="0" y="0" transform="translate(211.5 723.8) rotate(-90)" text-anchor="middle">300</text><text x="0" y="0" transform="translate(211.5 808.4) rotate(-90)" text-anchor="middle">320</text><text x="0" y="0" transform="translate(211.5 893.0) rotate(-90)" text-anchor="middle">340</text><text x="0" y="0" transform="translate(211.5 977.6) rotate(-90)" text-anchor="middle">360</text><text x="0" y="0" transform="translate(211.5 1062.2) rotate(-90)" text-anchor="middle">380</text><text x="0" y="0" transform="translate(211.5 1146.8) rotate(-90)" text-anchor="middle">400</text><text x="0" y="0" transform="translate(211.5 1231.4) rotate(-90)" text-anchor="middle">420</text><text x="0" y="0" transform="translate(211.5 1316.0) rotate(-90)" text-anchor="middle">440</text><text x="0" y="0" transform="translate(211.5 1400.6) rotate(-90)" text-anchor="middle">460</text><text x="0" y="0" transform="translate(211.5 1485.2) rotate(-90)" text-anchor="middle">480</text><text x="0" y="0" transform="translate(211.5 1569.8) rotate(-90)" text-anchor="middle">500</text><text x="0" y="0" transform="translate(211.5 1654.4) rotate(-90)" text-anchor="middle">520</text><text x="0" y="0" transform="translate(211.5 1739.0) rotate(-90)" text-anchor="middle">540</text><text x="0" y="0" transform="translate(211.5 1823.6) rotate(-90)" text-anchor="middle">560</text><text x="0" y="0" transform="translate(211.5 1908.2) rotate(-90)" text-anchor="middle">580</text><text x="0" y="0" transform="translate(211.5 1992.8) rotate(-90)" text-anchor="middle">600</text><text x="0" y="0" transform="translate(211.5 2077.4) rotate(-90)" text-anchor="middle">620</text><text x="0" y="0" transform="translate(211.5 2162.0) rotate(-90)" text-anchor="middle">640</text><text x="0" y="0" transform="translate(211.5 2246.6) rotate(-90)" text-anchor="middle">660</text></g><path d="M2107,246 V286" stroke="#f0f0f0" stroke-width="1.5"/><path d="M192,987 H232" stroke="#f0f0f0" stroke-width="1.5"/></g></svg>
<div class="a" style="left:831px;top:2263px;width:830px;height:16px;background:#555;border-radius:8px"></div>
<div class="a" style="left:2641.5px;top:823.5px;width:15px;height:506px;background:#555;border-radius:7.5px"></div><div class="a" style="left:126px;top:393px;width:52px;height:47px;background:#1d1d1d;border-radius:6px"></div>
<svg class="a" style="left:113px;top:246px" width="79" height="2036" viewBox="113 246 79 2036"><path d="M145,287 L145,310 L150.5,305 L155,314.5 L159,312.5 L154.5,303.5 L162,303 Z" fill="#161616" stroke="#e8e8e8" stroke-width="1.7" stroke-linejoin="round"/><rect x="139" y="345" width="30" height="30" fill="none" stroke="#3a9ce8" stroke-width="1.6" stroke-dasharray="4 2.5"/><rect x="142.5" y="348.5" width="23" height="23" fill="#a0a29c" stroke="#e0e0e0" stroke-width="1.4"/><path d="M142.5,352 h23 M142.5,368 h23" stroke="#777" stroke-width="1.2"/><path d="M135,344.5 h8 M139,340.5 v8" stroke="#3a9ce8" stroke-width="1.6"/><path d="M144,404 L144,428 L160,416 Z" fill="#f2f2f2"/><path d="M170,437 L178,429 L178,437 Z" fill="#666"/><circle cx="151" cy="475" r="16" fill="none" stroke="#bdbdbd" stroke-width="2"/><circle cx="151" cy="475" r="11" fill="none" stroke="#3a8ad8" stroke-width="2.2"/><circle cx="151" cy="475" r="6" fill="none" stroke="#e8e8e8" stroke-width="2"/><path d="M152,474 L166,462" stroke="#e8609a" stroke-width="2.2"/><path d="M161,461 L168,459 L166,466 Z" fill="#e8609a"/><path d="M136,515 L156,535" stroke="#3a8ad8" stroke-width="1.5"/><path d="M140,545 Q141,522 164,519" stroke="#eee" stroke-width="2" fill="none"/><circle cx="146" cy="525" r="4" fill="#3a8ad8" stroke="#fff" stroke-width="1.2"/><circle cx="164" cy="519" r="3.2" fill="#fff"/><circle cx="140" cy="545" r="3.2" fill="#fff"/><defs><linearGradient id="pg" x1="0" y1="0" x2="1" y2="1"><stop offset="0" stop-color="#f8d080"/><stop offset="1" stop-color="#c88a30"/></linearGradient><linearGradient id="pb" x1="0" y1="0" x2="1" y2="0"><stop offset="0" stop-color="#5ab0f0"/><stop offset="1" stop-color="#1f5aa8"/></linearGradient></defs><path d="M136.3,605.6 L142,587.1 L154.8,580.4 L160.5,590.7 L152.2,600 Z" fill="url(#pg)" stroke="#b07828" stroke-width="0.6"/><path d="M137.5,604.5 L150.2,592.2" stroke="#222" stroke-width="1.1"/><circle cx="150.2" cy="592.2" r="2.1" fill="#222"/><path d="M154,582 L163,573 L170,580 L161,589 Z" fill="#e8e8e8"/><path d="M156.5,584.5 L165.5,575.5 M158.8,586.8 L167.8,577.8" stroke="#111" stroke-width="1.3"/><path d="M161.5,573.5 L166,569.5 L171.5,575 L167.5,579.5 Z" fill="#7a2a18"/><path d="M140.5,656 L160.5,634.5 L167.5,641.5 L147,662.5 Z" fill="url(#pb)"/><path d="M140.5,656 L147,662.5 L134.8,665.5 Z" fill="#e0a868"/><path d="M134.8,665.5 L137.2,659.5 L140.8,663.2 Z" fill="#2f86d8"/><path d="M159,636 L162,632.8 L169,639.8 L166,643 Z" fill="#b8b8b8"/><path d="M162,632.8 L164.8,630 L171.8,637 L169,639.8 Z" fill="#f07868"/><path d="M140.5,665.2 C147,664 150,659 155,657.5 C160,656 165,659 168.2,664.2" stroke="#d8d8d8" stroke-width="1.3" fill="none"/><path d="M156,704 L166.5,692 L171,696 L160,707.5 Z" fill="#d0d0d0"/><path d="M166,692.5 L170,684 L172.5,687 L171,696 Z" fill="#e02838"/><path d="M165,693 L169.5,686.5 L172,689 L170.5,695 Z" fill="#e02838"/><path d="M142,715.5 C146,708 152,702 158,702.5 C161.5,704 161,708.5 156.5,711.5 C152,714.5 147,715.5 142,715.5 Z" fill="#a86a30"/><path d="M134.3,710.5 L147.1,723.3" stroke="#e8e8e8" stroke-width="1.2"/><circle cx="141" cy="716.8" r="2.4" fill="#f0f0f0"/><path d="M146,719.5 C152,722 156,716 160,714.5 C163,713.5 166,714.5 168,717" stroke="#2f86d8" stroke-width="1.6" fill="none"/><path d="M151,765 L151.00,749.00 A16,16 0 0 1 154.19,749.32 Z" fill="#ed2a2a"/><path d="M151,765 L153.78,749.24 A16,16 0 0 1 156.86,750.11 Z" fill="#ed4b2a"/><path d="M151,765 L156.47,749.96 A16,16 0 0 1 159.36,751.36 Z" fill="#ed6b2a"/><path d="M151,765 L159.00,751.14 A16,16 0 0 1 161.60,753.02 Z" fill="#ed8c2a"/><path d="M151,765 L161.28,752.74 A16,16 0 0 1 163.52,755.04 Z" fill="#edac2a"/><path d="M151,765 L163.26,754.72 A16,16 0 0 1 165.06,757.37 Z" fill="#edcd2a"/><path d="M151,765 L164.86,757.00 A16,16 0 0 1 166.17,759.92 Z" fill="#eded2a"/><path d="M151,765 L166.04,759.53 A16,16 0 0 1 166.82,762.64 Z" fill="#cded2a"/><path d="M151,765 L166.76,762.22 A16,16 0 0 1 166.99,765.42 Z" fill="#aced2a"/><path d="M151,765 L167.00,765.00 A16,16 0 0 1 166.68,768.19 Z" fill="#8ced2a"/><path d="M151,765 L166.76,767.78 A16,16 0 0 1 165.89,770.86 Z" fill="#6bed2a"/><path d="M151,765 L166.04,770.47 A16,16 0 0 1 164.64,773.36 Z" fill="#4bed2a"/><path d="M151,765 L164.86,773.00 A16,16 0 0 1 162.98,775.60 Z" fill="#2aed2a"/><path d="M151,765 L163.26,775.28 A16,16 0 0 1 160.96,777.52 Z" fill="#2aed4b"/><path d="M151,765 L161.28,777.26 A16,16 0 0 1 158.63,779.06 Z" fill="#2aed6b"/><path d="M151,765 L159.00,778.86 A16,16 0 0 1 156.08,780.17 Z" fill="#2aed8c"/><path d="M151,765 L156.47,780.04 A16,16 0 0 1 153.36,780.82 Z" fill="#2aedac"/><path d="M151,765 L153.78,780.76 A16,16 0 0 1 150.58,780.99 Z" fill="#2aedcd"/><path d="M151,765 L151.00,781.00 A16,16 0 0 1 147.81,780.68 Z" fill="#2aeded"/><path d="M151,765 L148.22,780.76 A16,16 0 0 1 145.14,779.89 Z" fill="#2acded"/><path d="M151,765 L145.53,780.04 A16,16 0 0 1 142.64,778.64 Z" fill="#2aaced"/><path d="M151,765 L143.00,778.86 A16,16 0 0 1 140.40,776.98 Z" fill="#2a8ced"/><path d="M151,765 L140.72,777.26 A16,16 0 0 1 138.48,774.96 Z" fill="#2a6bed"/><path d="M151,765 L138.74,775.28 A16,16 0 0 1 136.94,772.63 Z" fill="#2a4bed"/><path d="M151,765 L137.14,773.00 A16,16 0 0 1 135.83,770.08 Z" fill="#2a2aed"/><path d="M151,765 L135.96,770.47 A16,16 0 0 1 135.18,767.36 Z" fill="#4b2aed"/><path d="M151,765 L135.24,767.78 A16,16 0 0 1 135.01,764.58 Z" fill="#6b2aed"/><path d="M151,765 L135.00,765.00 A16,16 0 0 1 135.32,761.81 Z" fill="#8c2aed"/><path d="M151,765 L135.24,762.22 A16,16 0 0 1 136.11,759.14 Z" fill="#ac2aed"/><path d="M151,765 L135.96,759.53 A16,16 0 0 1 137.36,756.64 Z" fill="#cd2aed"/><path d="M151,765 L137.14,757.00 A16,16 0 0 1 139.02,754.40 Z" fill="#ed2aed"/><path d="M151,765 L138.74,754.72 A16,16 0 0 1 141.04,752.48 Z" fill="#ed2acd"/><path d="M151,765 L140.72,752.74 A16,16 0 0 1 143.37,750.94 Z" fill="#ed2aac"/><path d="M151,765 L143.00,751.14 A16,16 0 0 1 145.92,749.83 Z" fill="#ed2a8c"/><path d="M151,765 L145.53,749.96 A16,16 0 0 1 148.64,749.18 Z" fill="#ed2a6b"/><path d="M151,765 L148.22,749.24 A16,16 0 0 1 151.42,749.01 Z" fill="#ed2a4b"/><circle cx="151" cy="765" r="6.5" fill="#333"/><path d="M151,765 L168,748" stroke="#fff" stroke-width="1.8"/><circle cx="151" cy="765" r="3" fill="#fff"/><circle cx="168" cy="748" r="2.6" fill="#fff"/><circle cx="160" cy="756.5" r="1.6" fill="#fff"/><path d="M142,800 Q141,820 151,824 Q161,820 160,800 Z" fill="#c8d8e8" stroke="#8aa0b8" stroke-width="1"/><path d="M151,824 v10 M144,836 h14" stroke="#8aa0b8" stroke-width="2"/><rect x="134.5" y="866.5" width="35" height="27" fill="#5aaee8" stroke="#c8c8c8" stroke-width="2"/><path d="M135.5,880 Q142,876 150,879 Q158,874 168.5,878 V892.5 H135.5 Z" fill="#1e2844"/><path d="M146,887 Q154,884 163,882" stroke="#6ab8f0" stroke-width="1.5" fill="none"/><rect x="135.5" y="888" width="33" height="4.5" fill="#2a3350"/><circle cx="161" cy="873" r="3.4" fill="#f5b030"/><path d="M141,875.5 L144.5,871 L148,875.5 Z M138,875.5 H153" stroke="#fff" stroke-width="1" fill="#fff"/><path d="M142,921.5 V948 H168 M135.5,928 H162 V954.5 M135.8,954.2 L168.2,921.8" stroke="#a8a8a8" stroke-width="3.6" fill="none"/><defs><linearGradient id="bl" x1="0" y1="0" x2="0" y2="1"><stop offset="0" stop-color="#4aa0f0"/><stop offset="1" stop-color="#2a78c8"/></linearGradient></defs><rect x="137" y="982" width="28" height="28" fill="url(#bl)"/><circle cx="151" cy="1054" r="14" fill="url(#bl)"/><rect x="137" y="1098" width="28" height="28" rx="6" fill="url(#bl)"/><path d="M135,1182 C135,1166 142,1159 151,1159 C160,1159 167,1166 167,1182 Z" fill="url(#bl)"/><path d="M168,1195 L178,1185 L178,1195 Z" fill="#555"/><text x="151" y="1242" text-anchor="middle" font-family="Liberation Serif" font-size="36" fill="#e0e0e0">A</text><path d="M168,1253 L178,1243 L178,1253 Z" fill="#555"/><defs><linearGradient id="dg" x1="0" y1="0" x2="1" y2="1"><stop offset="0" stop-color="#e8b050"/><stop offset="1" stop-color="#9a6a20"/></linearGradient><linearGradient id="hg" x1="0" y1="0" x2="0" y2="1"><stop offset="0" stop-color="#f0b070"/><stop offset="1" stop-color="#e8a888"/></linearGradient><radialGradient id="zg" cx="0.4" cy="0.35" r="0.7"><stop offset="0" stop-color="#d8ecff"/><stop offset="1" stop-color="#3a90e0"/></radialGradient></defs><path d="M137,1300 L155,1282.5 L159.5,1287 L141.5,1304.5 Q138.5,1304 137,1300 Z" fill="#9a9a9a"/><path d="M136.5,1301 L135,1302.5 L137,1304.5 L138.5,1303" fill="#888"/><path d="M151,1282.5 L158,1275.5 L165,1282.5 L158,1289.5 Z" fill="url(#dg)"/><circle cx="161.5" cy="1276.4" r="6.3" fill="url(#dg)"/><path d="M143,1354 Q137,1349 136,1346 Q137,1343 141,1344 L145,1348 L141.5,1330 Q141.5,1327 144.5,1327.5 L149,1342 L149.5,1325.5 Q150.5,1322.5 153.5,1324 L155,1342 L158.5,1328 Q161,1326.5 162.5,1329 L160.5,1344 L165.5,1334 Q168,1332.5 168.5,1336 L162,1352 Q158,1361 152,1361 Q147,1360 143,1354 Z" fill="url(#hg)"/><path d="M158.5,1407.5 L166.5,1416" stroke="#b85a18" stroke-width="4.2" stroke-linecap="round"/><circle cx="149.2" cy="1398.8" r="11.2" fill="url(#zg)" stroke="#f4f4f4" stroke-width="2.6"/></svg><div class="a" style="left:2664px;top:246px;width:527px;height:2036px;background:#333"></div>
<div class="a" style="left:2664px;top:289px;width:527px;height:421px;background:#3e3e3e"></div>
<div class="a" style="left:2664px;top:246px;width:527px;height:43.5px;background:#2c2c2c"></div>
<div class="a" style="left:2664px;top:288.0px;width:527px;height:1.5px;background:#222"></div>
<div class="a" style="left:2702px;top:250px;width:74px;height:39.5px;background:#3d3d3d"></div>
<div class="a" style="left:2678px;top:259.75px;width:2px;height:15px;background:#555"></div><div class="a" style="left:2685px;top:259.75px;width:2px;height:15px;background:#555"></div>
<div class="a" style="left:2708.5px;top:256.5px;font-size:25px;line-height:30px;color:#ececec;white-space:nowrap">Color</div>
<div class="a" style="left:2804.5px;top:256.5px;font-size:25px;line-height:30px;color:#8c8c8c;white-space:nowrap">Swt</div>
<div class="a" style="left:2882px;top:256.5px;font-size:25px;line-height:30px;color:#8c8c8c;white-space:nowrap">Stroke</div>
<div class="a" style="left:2994px;top:256.5px;font-size:25px;line-height:30px;color:#8c8c8c;white-space:nowrap">Brs</div>
<div class="a" style="left:3086.5px;top:256.5px;font-size:25px;line-height:30px;color:#8c8c8c;white-space:nowrap">Apr</div>
<div class="a" style="left:2871px;top:257.75px;width:2px;height:20px;background:#5a5a5a"></div>
<div class="a" style="left:2966px;top:257.75px;width:2px;height:20px;background:#5a5a5a"></div>
<div class="a" style="left:3060px;top:257.75px;width:2px;height:20px;background:#5a5a5a"></div>
<svg class="i" style="left:3155px;top:246px" width="36" height="43.5" viewBox="3155 246 36 43.5"><path d="M3159,257.8 h17 M3159,261.8 h17 M3159,265.8 h17 M3159,269.8 h17" stroke="#e8e8e8" stroke-width="1.8"/><path d="M3179,268.8 h8 l-4,6 Z" fill="#e8e8e8"/></svg>
<svg class="a" style="left:2664px;top:289px" width="527" height="421" viewBox="2664 289 527 421"><defs><linearGradient id="tg1" x1="2881" y1="376" x2="2881" y2="592" gradientUnits="userSpaceOnUse"><stop offset="0" stop-color="#000"/><stop offset="1" stop-color="#fff"/></linearGradient><linearGradient id="tg2" x1="3066" y1="485" x2="2881" y2="485" gradientUnits="userSpaceOnUse"><stop offset="0" stop-color="#ff1010"/><stop offset="1" stop-color="#ff1010" stop-opacity="0"/></linearGradient><radialGradient id="fg" cx="0.4" cy="0.35" r="0.7"><stop offset="0" stop-color="#ededed"/><stop offset="1" stop-color="#dcdcdc"/></radialGradient><pattern id="chk" x="2721" y="669" width="12" height="12" patternUnits="userSpaceOnUse"><rect width="12" height="12" fill="#cfcfcf"/><rect width="6" height="6" fill="#8a8a8a"/><rect x="6" y="6" width="6" height="6" fill="#8a8a8a"/></pattern><linearGradient id="og" x1="0" y1="0" x2="1" y2="0"><stop offset="0" stop-color="#fff" stop-opacity="0.85"/><stop offset="1" stop-color="#222" stop-opacity="0.85"/></linearGradient></defs><circle cx="2730.2" cy="354" r="26" fill="#555"/><circle cx="2730.2" cy="354" r="24.2" fill="url(#fg)"/><circle cx="2710.2" cy="333" r="20" fill="none" stroke="#5a5a5a" stroke-width="14"/><circle cx="2710.2" cy="333" r="19.8" fill="none" stroke="#000" stroke-width="11"/><circle cx="2690.9" cy="372.6" r="10.5" fill="#fff" stroke="#000" stroke-width="1.6"/><path d="M2684,379.5 L2698,365.5" stroke="#e8141c" stroke-width="1.8"/><path d="M2739,308.5 Q2755,309 2756,324" stroke="#d0d0d0" stroke-width="1.6" fill="none"/><path d="M2743,304 L2738,308.5 L2743,313 M2751.5,321.5 L2756,326 L2760.5,321.5" stroke="#d0d0d0" stroke-width="1.6" fill="none"/><defs><linearGradient id="dg2" x1="0" y1="0" x2="1" y2="1"><stop offset="0" stop-color="#f0b858"/><stop offset="1" stop-color="#9a6a20"/></linearGradient></defs><path d="M2779.5,337 L2795.5,321 L2800,325.5 L2784,341.5 Q2780.5,341 2779.5,337 Z" fill="#a0a0a0"/><path d="M2778,339.5 L2780.5,337 L2782.5,339 L2780,341.5 Z" fill="#888"/><path d="M2792,320.5 L2798.5,314 L2805,320.5 L2798.5,327 Z" fill="url(#dg2)"/><circle cx="2803.5" cy="314.5" r="6.2" fill="url(#dg2)"/><circle cx="2828.8" cy="323" r="15.5" fill="#000" stroke="#5a5a5a" stroke-width="2"/><path d="M3096.70,485.00 A153.7,153.7 0 0 0 3096.57,478.56 L3067.29,479.79 A124.4,124.4 0 0 1 3067.40,485.00 Z" fill="#ff0004"/><path d="M3096.61,479.64 A153.7,153.7 0 0 0 3096.25,473.21 L3067.03,475.46 A124.4,124.4 0 0 1 3067.32,480.66 Z" fill="#ff000c"/><path d="M3096.33,474.28 A153.7,153.7 0 0 0 3095.74,467.87 L3066.62,471.13 A124.4,124.4 0 0 1 3067.10,476.32 Z" fill="#ff0015"/><path d="M3095.86,468.93 A153.7,153.7 0 0 0 3095.05,462.55 L3066.07,466.83 A124.4,124.4 0 0 1 3066.72,472.00 Z" fill="#ff001d"/><path d="M3095.20,463.61 A153.7,153.7 0 0 0 3094.17,457.25 L3065.36,462.54 A124.4,124.4 0 0 1 3066.19,467.69 Z" fill="#ff0026"/><path d="M3094.36,458.31 A153.7,153.7 0 0 0 3093.11,452.00 L3064.50,458.29 A124.4,124.4 0 0 1 3065.51,463.40 Z" fill="#ff002e"/><path d="M3093.34,453.04 A153.7,153.7 0 0 0 3091.87,446.78 L3063.49,454.06 A124.4,124.4 0 0 1 3064.68,459.14 Z" fill="#ff0037"/><path d="M3092.13,447.82 A153.7,153.7 0 0 0 3090.45,441.60 L3062.34,449.88 A124.4,124.4 0 0 1 3063.70,454.90 Z" fill="#ff003f"/><path d="M3090.75,442.63 A153.7,153.7 0 0 0 3088.84,436.48 L3061.04,445.73 A124.4,124.4 0 0 1 3062.58,450.71 Z" fill="#ff0048"/><path d="M3089.18,437.50 A153.7,153.7 0 0 0 3087.06,431.42 L3059.60,441.64 A124.4,124.4 0 0 1 3061.31,446.56 Z" fill="#ff0050"/><path d="M3087.43,432.43 A153.7,153.7 0 0 0 3085.10,426.43 L3058.01,437.59 A124.4,124.4 0 0 1 3059.90,442.45 Z" fill="#ff0059"/><path d="M3085.51,427.42 A153.7,153.7 0 0 0 3082.97,421.51 L3056.29,433.61 A124.4,124.4 0 0 1 3058.34,438.40 Z" fill="#ff0061"/><path d="M3083.41,422.48 A153.7,153.7 0 0 0 3080.67,416.66 L3054.43,429.69 A124.4,124.4 0 0 1 3056.65,434.40 Z" fill="#ff006a"/><path d="M3081.14,417.62 A153.7,153.7 0 0 0 3078.20,411.90 L3052.43,425.83 A124.4,124.4 0 0 1 3054.81,430.47 Z" fill="#ff0072"/><path d="M3078.71,412.84 A153.7,153.7 0 0 0 3075.57,407.22 L3050.30,422.05 A124.4,124.4 0 0 1 3052.84,426.60 Z" fill="#ff007b"/><path d="M3076.11,408.15 A153.7,153.7 0 0 0 3072.77,402.64 L3048.03,418.34 A124.4,124.4 0 0 1 3050.73,422.80 Z" fill="#ff0083"/><path d="M3073.34,403.55 A153.7,153.7 0 0 0 3069.82,398.16 L3045.64,414.72 A124.4,124.4 0 0 1 3048.50,419.08 Z" fill="#ff008c"/><path d="M3070.42,399.05 A153.7,153.7 0 0 0 3066.71,393.79 L3043.13,411.18 A124.4,124.4 0 0 1 3046.13,415.44 Z" fill="#ff0094"/><path d="M3067.35,394.66 A153.7,153.7 0 0 0 3063.45,389.53 L3040.49,407.73 A124.4,124.4 0 0 1 3043.64,411.88 Z" fill="#ff009d"/><path d="M3064.12,390.37 A153.7,153.7 0 0 0 3060.05,385.38 L3037.74,404.37 A124.4,124.4 0 0 1 3041.03,408.41 Z" fill="#ff00a5"/><path d="M3060.74,386.20 A153.7,153.7 0 0 0 3056.50,381.36 L3034.86,401.12 A124.4,124.4 0 0 1 3038.30,405.04 Z" fill="#ff00ae"/><path d="M3057.22,382.15 A153.7,153.7 0 0 0 3052.81,377.46 L3031.88,397.96 A124.4,124.4 0 0 1 3035.45,401.76 Z" fill="#ff00b6"/><path d="M3053.56,378.23 A153.7,153.7 0 0 0 3048.99,373.69 L3028.79,394.91 A124.4,124.4 0 0 1 3032.49,398.58 Z" fill="#ff00bf"/><path d="M3049.77,374.44 A153.7,153.7 0 0 0 3045.05,370.06 L3025.59,391.97 A124.4,124.4 0 0 1 3029.42,395.51 Z" fill="#ff00c7"/><path d="M3045.85,370.78 A153.7,153.7 0 0 0 3040.97,366.57 L3022.30,389.15 A124.4,124.4 0 0 1 3026.24,392.55 Z" fill="#ff00d0"/><path d="M3041.80,367.26 A153.7,153.7 0 0 0 3036.78,363.23 L3018.90,386.44 A124.4,124.4 0 0 1 3022.96,389.70 Z" fill="#ff00d8"/><path d="M3037.63,363.88 A153.7,153.7 0 0 0 3032.47,360.03 L3015.42,383.85 A124.4,124.4 0 0 1 3019.59,386.97 Z" fill="#ff00e1"/><path d="M3033.34,360.65 A153.7,153.7 0 0 0 3028.06,356.98 L3011.84,381.38 A124.4,124.4 0 0 1 3016.12,384.36 Z" fill="#ff00e9"/><path d="M3028.95,357.58 A153.7,153.7 0 0 0 3023.54,354.09 L3008.18,379.05 A124.4,124.4 0 0 1 3012.56,381.87 Z" fill="#ff00f2"/><path d="M3024.45,354.66 A153.7,153.7 0 0 0 3018.92,351.36 L3004.45,376.83 A124.4,124.4 0 0 1 3008.92,379.50 Z" fill="#ff00fa"/><path d="M3019.85,351.89 A153.7,153.7 0 0 0 3014.21,348.79 L3000.63,374.76 A124.4,124.4 0 0 1 3005.20,377.27 Z" fill="#fa00ff"/><path d="M3015.16,349.29 A153.7,153.7 0 0 0 3009.41,346.39 L2996.75,372.81 A124.4,124.4 0 0 1 3001.40,375.16 Z" fill="#f200ff"/><path d="M3010.38,346.86 A153.7,153.7 0 0 0 3004.53,344.16 L2992.80,371.00 A124.4,124.4 0 0 1 2997.53,373.19 Z" fill="#e900ff"/><path d="M3005.52,344.59 A153.7,153.7 0 0 0 2999.58,342.09 L2988.79,369.34 A124.4,124.4 0 0 1 2993.60,371.35 Z" fill="#e100ff"/><path d="M3000.58,342.49 A153.7,153.7 0 0 0 2994.56,340.21 L2984.73,367.81 A124.4,124.4 0 0 1 2989.60,369.66 Z" fill="#d800ff"/><path d="M2995.57,340.57 A153.7,153.7 0 0 0 2989.47,338.49 L2980.61,366.42 A124.4,124.4 0 0 1 2985.55,368.10 Z" fill="#d000ff"/><path d="M2990.50,338.82 A153.7,153.7 0 0 0 2984.33,336.96 L2976.45,365.18 A124.4,124.4 0 0 1 2981.44,366.69 Z" fill="#c700ff"/><path d="M2985.37,337.25 A153.7,153.7 0 0 0 2979.14,335.61 L2972.25,364.09 A124.4,124.4 0 0 1 2977.29,365.42 Z" fill="#bf00ff"/><path d="M2980.18,335.87 A153.7,153.7 0 0 0 2973.91,334.44 L2968.01,363.14 A124.4,124.4 0 0 1 2973.10,364.30 Z" fill="#b600ff"/><path d="M2974.96,334.66 A153.7,153.7 0 0 0 2968.63,333.45 L2963.75,362.34 A124.4,124.4 0 0 1 2968.86,363.32 Z" fill="#ae00ff"/><path d="M2969.69,333.64 A153.7,153.7 0 0 0 2963.33,332.65 L2959.45,361.69 A124.4,124.4 0 0 1 2964.60,362.49 Z" fill="#a500ff"/><path d="M2964.39,332.80 A153.7,153.7 0 0 0 2958.00,332.03 L2955.14,361.19 A124.4,124.4 0 0 1 2960.31,361.81 Z" fill="#9d00ff"/><path d="M2959.07,332.14 A153.7,153.7 0 0 0 2952.65,331.60 L2950.81,360.85 A124.4,124.4 0 0 1 2956.00,361.28 Z" fill="#9400ff"/><path d="M2953.72,331.67 A153.7,153.7 0 0 0 2947.29,331.36 L2946.47,360.65 A124.4,124.4 0 0 1 2951.68,360.90 Z" fill="#8c00ff"/><path d="M2948.36,331.39 A153.7,153.7 0 0 0 2941.93,331.30 L2942.13,360.60 A124.4,124.4 0 0 1 2947.34,360.68 Z" fill="#8300ff"/><path d="M2943.00,331.30 A153.7,153.7 0 0 0 2936.56,331.43 L2937.79,360.71 A124.4,124.4 0 0 1 2943.00,360.60 Z" fill="#7b00ff"/><path d="M2937.64,331.39 A153.7,153.7 0 0 0 2931.21,331.75 L2933.46,360.97 A124.4,124.4 0 0 1 2938.66,360.68 Z" fill="#7200ff"/><path d="M2932.28,331.67 A153.7,153.7 0 0 0 2925.87,332.26 L2929.13,361.38 A124.4,124.4 0 0 1 2934.32,360.90 Z" fill="#6a00ff"/><path d="M2926.93,332.14 A153.7,153.7 0 0 0 2920.55,332.95 L2924.83,361.93 A124.4,124.4 0 0 1 2930.00,361.28 Z" fill="#6100ff"/><path d="M2921.61,332.80 A153.7,153.7 0 0 0 2915.25,333.83 L2920.54,362.64 A124.4,124.4 0 0 1 2925.69,361.81 Z" fill="#5900ff"/><path d="M2916.31,333.64 A153.7,153.7 0 0 0 2910.00,334.89 L2916.29,363.50 A124.4,124.4 0 0 1 2921.40,362.49 Z" fill="#5000ff"/><path d="M2911.04,334.66 A153.7,153.7 0 0 0 2904.78,336.13 L2912.06,364.51 A124.4,124.4 0 0 1 2917.14,363.32 Z" fill="#4800ff"/><path d="M2905.82,335.87 A153.7,153.7 0 0 0 2899.60,337.55 L2907.88,365.66 A124.4,124.4 0 0 1 2912.90,364.30 Z" fill="#3f00ff"/><path d="M2900.63,337.25 A153.7,153.7 0 0 0 2894.48,339.16 L2903.73,366.96 A124.4,124.4 0 0 1 2908.71,365.42 Z" fill="#3700ff"/><path d="M2895.50,338.82 A153.7,153.7 0 0 0 2889.42,340.94 L2899.64,368.40 A124.4,124.4 0 0 1 2904.56,366.69 Z" fill="#2e00ff"/><path d="M2890.43,340.57 A153.7,153.7 0 0 0 2884.43,342.90 L2895.59,369.99 A124.4,124.4 0 0 1 2900.45,368.10 Z" fill="#2600ff"/><path d="M2885.42,342.49 A153.7,153.7 0 0 0 2879.51,345.03 L2891.61,371.71 A124.4,124.4 0 0 1 2896.40,369.66 Z" fill="#1d00ff"/><path d="M2880.48,344.59 A153.7,153.7 0 0 0 2874.66,347.33 L2887.69,373.57 A124.4,124.4 0 0 1 2892.40,371.35 Z" fill="#1500ff"/><path d="M2875.62,346.86 A153.7,153.7 0 0 0 2869.90,349.80 L2883.83,375.57 A124.4,124.4 0 0 1 2888.47,373.19 Z" fill="#0c00ff"/><path d="M2870.84,349.29 A153.7,153.7 0 0 0 2865.22,352.43 L2880.05,377.70 A124.4,124.4 0 0 1 2884.60,375.16 Z" fill="#0400ff"/><path d="M2866.15,351.89 A153.7,153.7 0 0 0 2860.64,355.23 L2876.34,379.97 A124.4,124.4 0 0 1 2880.80,377.27 Z" fill="#0004ff"/><path d="M2861.55,354.66 A153.7,153.7 0 0 0 2856.16,358.18 L2872.72,382.36 A124.4,124.4 0 0 1 2877.08,379.50 Z" fill="#000cff"/><path d="M2857.05,357.58 A153.7,153.7 0 0 0 2851.79,361.29 L2869.18,384.87 A124.4,124.4 0 0 1 2873.44,381.87 Z" fill="#0015ff"/><path d="M2852.66,360.65 A153.7,153.7 0 0 0 2847.53,364.55 L2865.73,387.51 A124.4,124.4 0 0 1 2869.88,384.36 Z" fill="#001dff"/><path d="M2848.37,363.88 A153.7,153.7 0 0 0 2843.38,367.95 L2862.37,390.26 A124.4,124.4 0 0 1 2866.41,386.97 Z" fill="#0026ff"/><path d="M2844.20,367.26 A153.7,153.7 0 0 0 2839.36,371.50 L2859.12,393.14 A124.4,124.4 0 0 1 2863.04,389.70 Z" fill="#002eff"/><path d="M2840.15,370.78 A153.7,153.7 0 0 0 2835.46,375.19 L2855.96,396.12 A124.4,124.4 0 0 1 2859.76,392.55 Z" fill="#0037ff"/><path d="M2836.23,374.44 A153.7,153.7 0 0 0 2831.69,379.01 L2852.91,399.21 A124.4,124.4 0 0 1 2856.58,395.51 Z" fill="#003fff"/><path d="M2832.44,378.23 A153.7,153.7 0 0 0 2828.06,382.95 L2849.97,402.41 A124.4,124.4 0 0 1 2853.51,398.58 Z" fill="#0048ff"/><path d="M2828.78,382.15 A153.7,153.7 0 0 0 2824.57,387.03 L2847.15,405.70 A124.4,124.4 0 0 1 2850.55,401.76 Z" fill="#0050ff"/><path d="M2825.26,386.20 A153.7,153.7 0 0 0 2821.23,391.22 L2844.44,409.10 A124.4,124.4 0 0 1 2847.70,405.04 Z" fill="#0059ff"/><path d="M2821.88,390.37 A153.7,153.7 0 0 0 2818.03,395.53 L2841.85,412.58 A124.4,124.4 0 0 1 2844.97,408.41 Z" fill="#0061ff"/><path d="M2818.65,394.66 A153.7,153.7 0 0 0 2814.98,399.94 L2839.38,416.16 A124.4,124.4 0 0 1 2842.36,411.88 Z" fill="#006aff"/><path d="M2815.58,399.05 A153.7,153.7 0 0 0 2812.09,404.46 L2837.05,419.82 A124.4,124.4 0 0 1 2839.87,415.44 Z" fill="#0072ff"/><path d="M2812.66,403.55 A153.7,153.7 0 0 0 2809.36,409.08 L2834.83,423.55 A124.4,124.4 0 0 1 2837.50,419.08 Z" fill="#007bff"/><path d="M2809.89,408.15 A153.7,153.7 0 0 0 2806.79,413.79 L2832.76,427.37 A124.4,124.4 0 0 1 2835.27,422.80 Z" fill="#0083ff"/><path d="M2807.29,412.84 A153.7,153.7 0 0 0 2804.39,418.59 L2830.81,431.25 A124.4,124.4 0 0 1 2833.16,426.60 Z" fill="#008cff"/><path d="M2804.86,417.62 A153.7,153.7 0 0 0 2802.16,423.47 L2829.00,435.20 A124.4,124.4 0 0 1 2831.19,430.47 Z" fill="#0094ff"/><path d="M2802.59,422.48 A153.7,153.7 0 0 0 2800.09,428.42 L2827.34,439.21 A124.4,124.4 0 0 1 2829.35,434.40 Z" fill="#009dff"/><path d="M2800.49,427.42 A153.7,153.7 0 0 0 2798.21,433.44 L2825.81,443.27 A124.4,124.4 0 0 1 2827.66,438.40 Z" fill="#00a5ff"/><path d="M2798.57,432.43 A153.7,153.7 0 0 0 2796.49,438.53 L2824.42,447.39 A124.4,124.4 0 0 1 2826.10,442.45 Z" fill="#00aeff"/><path d="M2796.82,437.50 A153.7,153.7 0 0 0 2794.96,443.67 L2823.18,451.55 A124.4,124.4 0 0 1 2824.69,446.56 Z" fill="#00b6ff"/><path d="M2795.25,442.63 A153.7,153.7 0 0 0 2793.61,448.86 L2822.09,455.75 A124.4,124.4 0 0 1 2823.42,450.71 Z" fill="#00bfff"/><path d="M2793.87,447.82 A153.7,153.7 0 0 0 2792.44,454.09 L2821.14,459.99 A124.4,124.4 0 0 1 2822.30,454.90 Z" fill="#00c7ff"/><path d="M2792.66,453.04 A153.7,153.7 0 0 0 2791.45,459.37 L2820.34,464.25 A124.4,124.4 0 0 1 2821.32,459.14 Z" fill="#00d0ff"/><path d="M2791.64,458.31 A153.7,153.7 0 0 0 2790.65,464.67 L2819.69,468.55 A124.4,124.4 0 0 1 2820.49,463.40 Z" fill="#00d8ff"/><path d="M2790.80,463.61 A153.7,153.7 0 0 0 2790.03,470.00 L2819.19,472.86 A124.4,124.4 0 0 1 2819.81,467.69 Z" fill="#00e1ff"/><path d="M2790.14,468.93 A153.7,153.7 0 0 0 2789.60,475.35 L2818.85,477.19 A124.4,124.4 0 0 1 2819.28,472.00 Z" fill="#00e9ff"/><path d="M2789.67,474.28 A153.7,153.7 0 0 0 2789.36,480.71 L2818.65,481.53 A124.4,124.4 0 0 1 2818.90,476.32 Z" fill="#00f2ff"/><path d="M2789.39,479.64 A153.7,153.7 0 0 0 2789.30,486.07 L2818.60,485.87 A124.4,124.4 0 0 1 2818.68,480.66 Z" fill="#00faff"/><path d="M2789.30,485.00 A153.7,153.7 0 0 0 2789.43,491.44 L2818.71,490.21 A124.4,124.4 0 0 1 2818.60,485.00 Z" fill="#00fffa"/><path d="M2789.39,490.36 A153.7,153.7 0 0 0 2789.75,496.79 L2818.97,494.54 A124.4,124.4 0 0 1 2818.68,489.34 Z" fill="#00fff2"/><path d="M2789.67,495.72 A153.7,153.7 0 0 0 2790.26,502.13 L2819.38,498.87 A124.4,124.4 0 0 1 2818.90,493.68 Z" fill="#00ffe9"/><path d="M2790.14,501.07 A153.7,153.7 0 0 0 2790.95,507.45 L2819.93,503.17 A124.4,124.4 0 0 1 2819.28,498.00 Z" fill="#00ffe1"/><path d="M2790.80,506.39 A153.7,153.7 0 0 0 2791.83,512.75 L2820.64,507.46 A124.4,124.4 0 0 1 2819.81,502.31 Z" fill="#00ffd8"/><path d="M2791.64,511.69 A153.7,153.7 0 0 0 2792.89,518.00 L2821.50,511.71 A124.4,124.4 0 0 1 2820.49,506.60 Z" fill="#00ffd0"/><path d="M2792.66,516.96 A153.7,153.7 0 0 0 2794.13,523.22 L2822.51,515.94 A124.4,124.4 0 0 1 2821.32,510.86 Z" fill="#00ffc7"/><path d="M2793.87,522.18 A153.7,153.7 0 0 0 2795.55,528.40 L2823.66,520.12 A124.4,124.4 0 0 1 2822.30,515.10 Z" fill="#00ffbf"/><path d="M2795.25,527.37 A153.7,153.7 0 0 0 2797.16,533.52 L2824.96,524.27 A124.4,124.4 0 0 1 2823.42,519.29 Z" fill="#00ffb6"/><path d="M2796.82,532.50 A153.7,153.7 0 0 0 2798.94,538.58 L2826.40,528.36 A124.4,124.4 0 0 1 2824.69,523.44 Z" fill="#00ffae"/><path d="M2798.57,537.57 A153.7,153.7 0 0 0 2800.90,543.57 L2827.99,532.41 A124.4,124.4 0 0 1 2826.10,527.55 Z" fill="#00ffa5"/><path d="M2800.49,542.58 A153.7,153.7 0 0 0 2803.03,548.49 L2829.71,536.39 A124.4,124.4 0 0 1 2827.66,531.60 Z" fill="#00ff9d"/><path d="M2802.59,547.52 A153.7,153.7 0 0 0 2805.33,553.34 L2831.57,540.31 A124.4,124.4 0 0 1 2829.35,535.60 Z" fill="#00ff94"/><path d="M2804.86,552.38 A153.7,153.7 0 0 0 2807.80,558.10 L2833.57,544.17 A124.4,124.4 0 0 1 2831.19,539.53 Z" fill="#00ff8c"/><path d="M2807.29,557.16 A153.7,153.7 0 0 0 2810.43,562.78 L2835.70,547.95 A124.4,124.4 0 0 1 2833.16,543.40 Z" fill="#00ff83"/><path d="M2809.89,561.85 A153.7,153.7 0 0 0 2813.23,567.36 L2837.97,551.66 A124.4,124.4 0 0 1 2835.27,547.20 Z" fill="#00ff7b"/><path d="M2812.66,566.45 A153.7,153.7 0 0 0 2816.18,571.84 L2840.36,555.28 A124.4,124.4 0 0 1 2837.50,550.92 Z" fill="#00ff72"/><path d="M2815.58,570.95 A153.7,153.7 0 0 0 2819.29,576.21 L2842.87,558.82 A124.4,124.4 0 0 1 2839.87,554.56 Z" fill="#00ff6a"/><path d="M2818.65,575.34 A153.7,153.7 0 0 0 2822.55,580.47 L2845.51,562.27 A124.4,124.4 0 0 1 2842.36,558.12 Z" fill="#00ff61"/><path d="M2821.88,579.63 A153.7,153.7 0 0 0 2825.95,584.62 L2848.26,565.63 A124.4,124.4 0 0 1 2844.97,561.59 Z" fill="#00ff59"/><path d="M2825.26,583.80 A153.7,153.7 0 0 0 2829.50,588.64 L2851.14,568.88 A124.4,124.4 0 0 1 2847.70,564.96 Z" fill="#00ff50"/><path d="M2828.78,587.85 A153.7,153.7 0 0 0 2833.19,592.54 L2854.12,572.04 A124.4,124.4 0 0 1 2850.55,568.24 Z" fill="#00ff48"/><path d="M2832.44,591.77 A153.7,153.7 0 0 0 2837.01,596.31 L2857.21,575.09 A124.4,124.4 0 0 1 2853.51,571.42 Z" fill="#00ff3f"/><path d="M2836.23,595.56 A153.7,153.7 0 0 0 2840.95,599.94 L2860.41,578.03 A124.4,124.4 0 0 1 2856.58,574.49 Z" fill="#00ff37"/><path d="M2840.15,599.22 A153.7,153.7 0 0 0 2845.03,603.43 L2863.70,580.85 A124.4,124.4 0 0 1 2859.76,577.45 Z" fill="#00ff2e"/><path d="M2844.20,602.74 A153.7,153.7 0 0 0 2849.22,606.77 L2867.10,583.56 A124.4,124.4 0 0 1 2863.04,580.30 Z" fill="#00ff26"/><path d="M2848.37,606.12 A153.7,153.7 0 0 0 2853.53,609.97 L2870.58,586.15 A124.4,124.4 0 0 1 2866.41,583.03 Z" fill="#00ff1d"/><path d="M2852.66,609.35 A153.7,153.7 0 0 0 2857.94,613.02 L2874.16,588.62 A124.4,124.4 0 0 1 2869.88,585.64 Z" fill="#00ff15"/><path d="M2857.05,612.42 A153.7,153.7 0 0 0 2862.46,615.91 L2877.82,590.95 A124.4,124.4 0 0 1 2873.44,588.13 Z" fill="#00ff0c"/><path d="M2861.55,615.34 A153.7,153.7 0 0 0 2867.08,618.64 L2881.55,593.17 A124.4,124.4 0 0 1 2877.08,590.50 Z" fill="#00ff04"/><path d="M2866.15,618.11 A153.7,153.7 0 0 0 2871.79,621.21 L2885.37,595.24 A124.4,124.4 0 0 1 2880.80,592.73 Z" fill="#04ff00"/><path d="M2870.84,620.71 A153.7,153.7 0 0 0 2876.59,623.61 L2889.25,597.19 A124.4,124.4 0 0 1 2884.60,594.84 Z" fill="#0cff00"/><path d="M2875.62,623.14 A153.7,153.7 0 0 0 2881.47,625.84 L2893.20,599.00 A124.4,124.4 0 0 1 2888.47,596.81 Z" fill="#15ff00"/><path d="M2880.48,625.41 A153.7,153.7 0 0 0 2886.42,627.91 L2897.21,600.66 A124.4,124.4 0 0 1 2892.40,598.65 Z" fill="#1dff00"/><path d="M2885.42,627.51 A153.7,153.7 0 0 0 2891.44,629.79 L2901.27,602.19 A124.4,124.4 0 0 1 2896.40,600.34 Z" fill="#26ff00"/><path d="M2890.43,629.43 A153.7,153.7 0 0 0 2896.53,631.51 L2905.39,603.58 A124.4,124.4 0 0 1 2900.45,601.90 Z" fill="#2eff00"/><path d="M2895.50,631.18 A153.7,153.7 0 0 0 2901.67,633.04 L2909.55,604.82 A124.4,124.4 0 0 1 2904.56,603.31 Z" fill="#37ff00"/><path d="M2900.63,632.75 A153.7,153.7 0 0 0 2906.86,634.39 L2913.75,605.91 A124.4,124.4 0 0 1 2908.71,604.58 Z" fill="#3fff00"/><path d="M2905.82,634.13 A153.7,153.7 0 0 0 2912.09,635.56 L2917.99,606.86 A124.4,124.4 0 0 1 2912.90,605.70 Z" fill="#48ff00"/><path d="M2911.04,635.34 A153.7,153.7 0 0 0 2917.37,636.55 L2922.25,607.66 A124.4,124.4 0 0 1 2917.14,606.68 Z" fill="#50ff00"/><path d="M2916.31,636.36 A153.7,153.7 0 0 0 2922.67,637.35 L2926.55,608.31 A124.4,124.4 0 0 1 2921.40,607.51 Z" fill="#59ff00"/><path d="M2921.61,637.20 A153.7,153.7 0 0 0 2928.00,637.97 L2930.86,608.81 A124.4,124.4 0 0 1 2925.69,608.19 Z" fill="#61ff00"/><path d="M2926.93,637.86 A153.7,153.7 0 0 0 2933.35,638.40 L2935.19,609.15 A124.4,124.4 0 0 1 2930.00,608.72 Z" fill="#6aff00"/><path d="M2932.28,638.33 A153.7,153.7 0 0 0 2938.71,638.64 L2939.53,609.35 A124.4,124.4 0 0 1 2934.32,609.10 Z" fill="#72ff00"/><path d="M2937.64,638.61 A153.7,153.7 0 0 0 2944.07,638.70 L2943.87,609.40 A124.4,124.4 0 0 1 2938.66,609.32 Z" fill="#7bff00"/><path d="M2943.00,638.70 A153.7,153.7 0 0 0 2949.44,638.57 L2948.21,609.29 A124.4,124.4 0 0 1 2943.00,609.40 Z" fill="#83ff00"/><path d="M2948.36,638.61 A153.7,153.7 0 0 0 2954.79,638.25 L2952.54,609.03 A124.4,124.4 0 0 1 2947.34,609.32 Z" fill="#8cff00"/><path d="M2953.72,638.33 A153.7,153.7 0 0 0 2960.13,637.74 L2956.87,608.62 A124.4,124.4 0 0 1 2951.68,609.10 Z" fill="#94ff00"/><path d="M2959.07,637.86 A153.7,153.7 0 0 0 2965.45,637.05 L2961.17,608.07 A124.4,124.4 0 0 1 2956.00,608.72 Z" fill="#9dff00"/><path d="M2964.39,637.20 A153.7,153.7 0 0 0 2970.75,636.17 L2965.46,607.36 A124.4,124.4 0 0 1 2960.31,608.19 Z" fill="#a5ff00"/><path d="M2969.69,636.36 A153.7,153.7 0 0 0 2976.00,635.11 L2969.71,606.50 A124.4,124.4 0 0 1 2964.60,607.51 Z" fill="#aeff00"/><path d="M2974.96,635.34 A153.7,153.7 0 0 0 2981.22,633.87 L2973.94,605.49 A124.4,124.4 0 0 1 2968.86,606.68 Z" fill="#b6ff00"/><path d="M2980.18,634.13 A153.7,153.7 0 0 0 2986.40,632.45 L2978.12,604.34 A124.4,124.4 0 0 1 2973.10,605.70 Z" fill="#bfff00"/><path d="M2985.37,632.75 A153.7,153.7 0 0 0 2991.52,630.84 L2982.27,603.04 A124.4,124.4 0 0 1 2977.29,604.58 Z" fill="#c7ff00"/><path d="M2990.50,631.18 A153.7,153.7 0 0 0 2996.58,629.06 L2986.36,601.60 A124.4,124.4 0 0 1 2981.44,603.31 Z" fill="#d0ff00"/><path d="M2995.57,629.43 A153.7,153.7 0 0 0 3001.57,627.10 L2990.41,600.01 A124.4,124.4 0 0 1 2985.55,601.90 Z" fill="#d8ff00"/><path d="M3000.58,627.51 A153.7,153.7 0 0 0 3006.49,624.97 L2994.39,598.29 A124.4,124.4 0 0 1 2989.60,600.34 Z" fill="#e1ff00"/><path d="M3005.52,625.41 A153.7,153.7 0 0 0 3011.34,622.67 L2998.31,596.43 A124.4,124.4 0 0 1 2993.60,598.65 Z" fill="#e9ff00"/><path d="M3010.38,623.14 A153.7,153.7 0 0 0 3016.10,620.20 L3002.17,594.43 A124.4,124.4 0 0 1 2997.53,596.81 Z" fill="#f2ff00"/><path d="M3015.16,620.71 A153.7,153.7 0 0 0 3020.78,617.57 L3005.95,592.30 A124.4,124.4 0 0 1 3001.40,594.84 Z" fill="#faff00"/><path d="M3019.85,618.11 A153.7,153.7 0 0 0 3025.36,614.77 L3009.66,590.03 A124.4,124.4 0 0 1 3005.20,592.73 Z" fill="#fffa00"/><path d="M3024.45,615.34 A153.7,153.7 0 0 0 3029.84,611.82 L3013.28,587.64 A124.4,124.4 0 0 1 3008.92,590.50 Z" fill="#fff200"/><path d="M3028.95,612.42 A153.7,153.7 0 0 0 3034.21,608.71 L3016.82,585.13 A124.4,124.4 0 0 1 3012.56,588.13 Z" fill="#ffe900"/><path d="M3033.34,609.35 A153.7,153.7 0 0 0 3038.47,605.45 L3020.27,582.49 A124.4,124.4 0 0 1 3016.12,585.64 Z" fill="#ffe100"/><path d="M3037.63,606.12 A153.7,153.7 0 0 0 3042.62,602.05 L3023.63,579.74 A124.4,124.4 0 0 1 3019.59,583.03 Z" fill="#ffd800"/><path d="M3041.80,602.74 A153.7,153.7 0 0 0 3046.64,598.50 L3026.88,576.86 A124.4,124.4 0 0 1 3022.96,580.30 Z" fill="#ffd000"/><path d="M3045.85,599.22 A153.7,153.7 0 0 0 3050.54,594.81 L3030.04,573.88 A124.4,124.4 0 0 1 3026.24,577.45 Z" fill="#ffc700"/><path d="M3049.77,595.56 A153.7,153.7 0 0 0 3054.31,590.99 L3033.09,570.79 A124.4,124.4 0 0 1 3029.42,574.49 Z" fill="#ffbf00"/><path d="M3053.56,591.77 A153.7,153.7 0 0 0 3057.94,587.05 L3036.03,567.59 A124.4,124.4 0 0 1 3032.49,571.42 Z" fill="#ffb600"/><path d="M3057.22,587.85 A153.7,153.7 0 0 0 3061.43,582.97 L3038.85,564.30 A124.4,124.4 0 0 1 3035.45,568.24 Z" fill="#ffae00"/><path d="M3060.74,583.80 A153.7,153.7 0 0 0 3064.77,578.78 L3041.56,560.90 A124.4,124.4 0 0 1 3038.30,564.96 Z" fill="#ffa500"/><path d="M3064.12,579.63 A153.7,153.7 0 0 0 3067.97,574.47 L3044.15,557.42 A124.4,124.4 0 0 1 3041.03,561.59 Z" fill="#ff9d00"/><path d="M3067.35,575.34 A153.7,153.7 0 0 0 3071.02,570.06 L3046.62,553.84 A124.4,124.4 0 0 1 3043.64,558.12 Z" fill="#ff9400"/><path d="M3070.42,570.95 A153.7,153.7 0 0 0 3073.91,565.54 L3048.95,550.18 A124.4,124.4 0 0 1 3046.13,554.56 Z" fill="#ff8c00"/><path d="M3073.34,566.45 A153.7,153.7 0 0 0 3076.64,560.92 L3051.17,546.45 A124.4,124.4 0 0 1 3048.50,550.92 Z" fill="#ff8300"/><path d="M3076.11,561.85 A153.7,153.7 0 0 0 3079.21,556.21 L3053.24,542.63 A124.4,124.4 0 0 1 3050.73,547.20 Z" fill="#ff7b00"/><path d="M3078.71,557.16 A153.7,153.7 0 0 0 3081.61,551.41 L3055.19,538.75 A124.4,124.4 0 0 1 3052.84,543.40 Z" fill="#ff7200"/><path d="M3081.14,552.38 A153.7,153.7 0 0 0 3083.84,546.53 L3057.00,534.80 A124.4,124.4 0 0 1 3054.81,539.53 Z" fill="#ff6a00"/><path d="M3083.41,547.52 A153.7,153.7 0 0 0 3085.91,541.58 L3058.66,530.79 A124.4,124.4 0 0 1 3056.65,535.60 Z" fill="#ff6100"/><path d="M3085.51,542.58 A153.7,153.7 0 0 0 3087.79,536.56 L3060.19,526.73 A124.4,124.4 0 0 1 3058.34,531.60 Z" fill="#ff5900"/><path d="M3087.43,537.57 A153.7,153.7 0 0 0 3089.51,531.47 L3061.58,522.61 A124.4,124.4 0 0 1 3059.90,527.55 Z" fill="#ff5000"/><path d="M3089.18,532.50 A153.7,153.7 0 0 0 3091.04,526.33 L3062.82,518.45 A124.4,124.4 0 0 1 3061.31,523.44 Z" fill="#ff4800"/><path d="M3090.75,527.37 A153.7,153.7 0 0 0 3092.39,521.14 L3063.91,514.25 A124.4,124.4 0 0 1 3062.58,519.29 Z" fill="#ff3f00"/><path d="M3092.13,522.18 A153.7,153.7 0 0 0 3093.56,515.91 L3064.86,510.01 A124.4,124.4 0 0 1 3063.70,515.10 Z" fill="#ff3700"/><path d="M3093.34,516.96 A153.7,153.7 0 0 0 3094.55,510.63 L3065.66,505.75 A124.4,124.4 0 0 1 3064.68,510.86 Z" fill="#ff2e00"/><path d="M3094.36,511.69 A153.7,153.7 0 0 0 3095.35,505.33 L3066.31,501.45 A124.4,124.4 0 0 1 3065.51,506.60 Z" fill="#ff2600"/><path d="M3095.20,506.39 A153.7,153.7 0 0 0 3095.97,500.00 L3066.81,497.14 A124.4,124.4 0 0 1 3066.19,502.31 Z" fill="#ff1d00"/><path d="M3095.86,501.07 A153.7,153.7 0 0 0 3096.40,494.65 L3067.15,492.81 A124.4,124.4 0 0 1 3066.72,498.00 Z" fill="#ff1500"/><path d="M3096.33,495.72 A153.7,153.7 0 0 0 3096.64,489.29 L3067.35,488.47 A124.4,124.4 0 0 1 3067.10,493.68 Z" fill="#ff0c00"/><path d="M3096.61,490.36 A153.7,153.7 0 0 0 3096.70,483.93 L3067.40,484.13 A124.4,124.4 0 0 1 3067.32,489.34 Z" fill="#ff0400"/><circle cx="2943" cy="485" r="153.7" fill="none" stroke="#333" stroke-width="1"/><circle cx="2943" cy="485" r="124.4" fill="none" stroke="#333" stroke-width="1"/><path d="M2881,376 L3066,485 L2881,592 Z" fill="url(#tg1)"/><path d="M2881,376 L3066,485 L2881,592 Z" fill="url(#tg2)" stroke="#2e2e2e" stroke-width="1.5"/><circle cx="2880.8" cy="377.2" r="9" fill="#000" stroke="#fff" stroke-width="2.6"/><circle cx="3082" cy="485" r="9" fill="#f01c1c" stroke="#fff" stroke-width="2.6"/><g font-family="Liberation Sans" fill="#e6e6e6"><text x="2679" y="564" font-size="20">H:</text><text x="2706" y="568" font-size="22">0</text><text x="2680" y="591" font-size="20">S:</text><text x="2706" y="594" font-size="22">100</text><text x="2681" y="617" font-size="20">L:</text><text x="2706" y="620" font-size="22">0</text><text x="2680.5" y="651.5" font-size="23">Opacity</text></g><circle cx="2694.5" cy="678" r="13" fill="#000"/><rect x="2721" y="668.5" width="320" height="19" rx="9.5" fill="#2a2a2a"/><rect x="2722.5" y="670" width="317" height="16" rx="8" fill="url(#chk)"/><rect x="2722.5" y="670" width="317" height="16" rx="8" fill="url(#og)"/><circle cx="3030" cy="677.5" r="10.5" fill="#3a3a3a" stroke="#fff" stroke-width="3"/><rect x="3060" y="657" width="121" height="41" rx="5" fill="#333" stroke="#262626" stroke-width="2"/><path d="M3147,658 V697" stroke="#262626" stroke-width="2"/><text x="3066" y="686.5" font-family="Liberation Sans" font-size="24" fill="#e8e8e8">100 %</text><path d="M3159.5,674 h10 l-5,9 Z" fill="#d8d8d8"/></svg>
<div class="a" style="left:2664px;top:710px;width:527px;height:4px;background:#262626"></div><div class="a" style="left:2664px;top:714px;width:527px;height:44px;background:#2c2c2c"></div>
<div class="a" style="left:2664px;top:756.5px;width:527px;height:1.5px;background:#222"></div>
<div class="a" style="left:2702px;top:718px;width:88px;height:40px;background:#3d3d3d"></div>
<div class="a" style="left:2678px;top:728.0px;width:2px;height:15px;background:#555"></div><div class="a" style="left:2685px;top:728.0px;width:2px;height:15px;background:#555"></div>
<div class="a" style="left:2708px;top:724.5px;font-size:25px;line-height:30px;color:#ececec;white-space:nowrap">Layers</div>
<div class="a" style="left:2822.5px;top:724.5px;font-size:25px;line-height:30px;color:#8c8c8c;white-space:nowrap">FX</div>
<div class="a" style="left:2892.5px;top:724.5px;font-size:25px;line-height:30px;color:#8c8c8c;white-space:nowrap">Styles</div>
<div class="a" style="left:2998px;top:724.5px;font-size:25px;line-height:30px;color:#8c8c8c;white-space:nowrap">TSt</div>
<div class="a" style="left:3074px;top:724.5px;font-size:25px;line-height:30px;color:#8c8c8c;white-space:nowrap">Stock</div>
<div class="a" style="left:2881px;top:726.0px;width:2px;height:20px;background:#5a5a5a"></div>
<div class="a" style="left:2971px;top:726.0px;width:2px;height:20px;background:#5a5a5a"></div>
<div class="a" style="left:3061px;top:726.0px;width:2px;height:20px;background:#5a5a5a"></div>
<svg class="i" style="left:3155px;top:714px" width="36" height="44" viewBox="3155 714 36 44"><path d="M3159,726.0 h17 M3159,730.0 h17 M3159,734.0 h17 M3159,738.0 h17" stroke="#e8e8e8" stroke-width="1.8"/><path d="M3179,737.0 h8 l-4,6 Z" fill="#e8e8e8"/></svg>
<div class="a" style="left:2664px;top:758px;width:527px;height:60px;background:#3e3e3e"></div>
<div class="a" style="left:2675px;top:774px;font-size:24px;line-height:30px;color:#e8e8e8">Opacity:</div>
<div class="a" style="left:2785px;top:769px;width:96px;height:40px;background:#2b2b2b;border-radius:6px;box-shadow:inset 0 1px 0 #222, 0 1px 0 #474747"></div>
<div class="a" style="left:2791px;top:776px;width:61px;height:32px;overflow:hidden"><div class="a" style="left:0;top:0;font-size:24px;line-height:30px;color:#e8e8e8;white-space:nowrap">100 %</div></div>
<svg class="i" style="left:2860px;top:780px" width="20" height="20" viewBox="2860 780 20 20"><path d="M2864,786 h10 l-5,8 Z" fill="#d8d8d8"/></svg>
<div class="a" style="left:2887px;top:769px;width:216px;height:39px;background:#373737;border-radius:6px;box-shadow:0 0 0 1.5px #262626, 0 2px 0 1px #2b2b2b"></div>
<div class="a" style="left:2897px;top:775px;font-size:24px;line-height:30px;color:#e8e8e8">Normal</div>
<svg class="i" style="left:3078px;top:775px" width="20" height="28" viewBox="3078 775 20 28"><path d="M3082.5,786 l4.5,-7 l4.5,7 Z M3082.5,791 l4.5,7 l4.5,-7 Z" fill="#d8d8d8"/></svg>
<svg class="i" style="left:3105px;top:765px" width="80" height="45" viewBox="3105 765 80 45"><rect x="3121.2" y="776.6" width="5.6" height="7" transform="rotate(0 3124 788.6)" fill="#a8a8a8"/><rect x="3121.2" y="776.6" width="5.6" height="7" transform="rotate(45 3124 788.6)" fill="#a8a8a8"/><rect x="3121.2" y="776.6" width="5.6" height="7" transform="rotate(90 3124 788.6)" fill="#a8a8a8"/><rect x="3121.2" y="776.6" width="5.6" height="7" transform="rotate(135 3124 788.6)" fill="#a8a8a8"/><rect x="3121.2" y="776.6" width="5.6" height="7" transform="rotate(180 3124 788.6)" fill="#a8a8a8"/><rect x="3121.2" y="776.6" width="5.6" height="7" transform="rotate(225 3124 788.6)" fill="#a8a8a8"/><rect x="3121.2" y="776.6" width="5.6" height="7" transform="rotate(270 3124 788.6)" fill="#a8a8a8"/><rect x="3121.2" y="776.6" width="5.6" height="7" transform="rotate(315 3124 788.6)" fill="#a8a8a8"/><circle cx="3124" cy="788.6" r="8.6" fill="#a8a8a8"/><circle cx="3124" cy="788.6" r="3.8" fill="#3e3e3e"/><path d="M3156.5,786 v-5 a6.3,6.3 0 0 1 12.6,0 v5" stroke="#a8a8a8" stroke-width="2.6" fill="none"/><rect x="3153" y="785" width="19.5" height="15" rx="2" fill="#a8a8a8"/></svg>
<div class="a" style="left:2664px;top:818px;width:527px;height:1170px;background:#333;overflow:hidden">
<div class="a" style="left:0;top:0.0px;width:498px;height:64px;background:#5b7ea6"></div><div class="a" style="left:0;top:64.0px;width:498px;height:2px;background:#282828"></div><div class="a" style="left:42px;top:2.0px;width:60px;height:60px;background:#262626;border:2.5px solid #0a0a0a"></div><svg class="a" style="left:42px;top:2.0px" width="60" height="60" viewBox="42 2.0 60 60"><path d="M46.5,36.8 L97.5,27.2" stroke="#000" stroke-width="1.6" stroke-linecap="round"/></svg><div class="a" style="left:114px;top:16.0px;font-size:25px;line-height:30px;color:#c6d3e2">(Curve)</div><div class="a" style="left:436px;top:19.0px;width:26px;height:25px;background:#2b2b2b;border-radius:5px;box-shadow:0 0 0 1.5px #1e1e1e, 0 1px 0 1.5px #4a6a90"></div><svg class="a" style="left:436px;top:19.0px" width="26" height="25" viewBox="0 0 26 25"><path d="M6.5,13 L11,18.5 L19.5,6" stroke="#fff" stroke-width="2.4" fill="none"/></svg><div class="a" style="left:0;top:66.0px;width:498px;height:64px;background:#383838"></div><div class="a" style="left:0;top:130.0px;width:498px;height:2px;background:#282828"></div><div class="a" style="left:42px;top:68.0px;width:60px;height:60px;background:#262626;border:2.5px solid #0a0a0a"></div><svg class="a" style="left:42px;top:68.0px" width="60" height="60" viewBox="42 68.0 60 60"><path d="M46.5,103.6 L97.5,92.4" stroke="#000" stroke-width="3.2" stroke-linecap="round"/></svg><div class="a" style="left:114px;top:82.0px;font-size:25px;line-height:30px;color:#a8a8a8">(Curve)</div><div class="a" style="left:436px;top:85.0px;width:26px;height:25px;background:#2b2b2b;border-radius:5px;box-shadow:0 0 0 1.5px #1e1e1e, 0 1px 0 1.5px #444"></div><svg class="a" style="left:436px;top:85.0px" width="26" height="25" viewBox="0 0 26 25"><path d="M6.5,13 L11,18.5 L19.5,6" stroke="#fff" stroke-width="2.4" fill="none"/></svg><div class="a" style="left:0;top:132.0px;width:498px;height:64px;background:#5b7ea6"></div><div class="a" style="left:0;top:196.0px;width:498px;height:2px;background:#282828"></div><div class="a" style="left:42px;top:134.0px;width:60px;height:60px;background:#262626;border:2.5px solid #0a0a0a"></div><svg class="a" style="left:42px;top:134.0px" width="60" height="60" viewBox="42 134.0 60 60"><path d="M46.5,170.3 L97.5,157.7" stroke="#000" stroke-width="3.2" stroke-linecap="round"/></svg><div class="a" style="left:114px;top:148.0px;font-size:25px;line-height:30px;color:#c6d3e2">(Curve)</div><div class="a" style="left:436px;top:151.0px;width:26px;height:25px;background:#2b2b2b;border-radius:5px;box-shadow:0 0 0 1.5px #1e1e1e, 0 1px 0 1.5px #4a6a90"></div><svg class="a" style="left:436px;top:151.0px" width="26" height="25" viewBox="0 0 26 25"><path d="M6.5,13 L11,18.5 L19.5,6" stroke="#fff" stroke-width="2.4" fill="none"/></svg><div class="a" style="left:0;top:198.0px;width:498px;height:64px;background:#383838"></div><div class="a" style="left:0;top:262.0px;width:498px;height:2px;background:#282828"></div><div class="a" style="left:42px;top:200.0px;width:60px;height:60px;background:#262626;border:2.5px solid #0a0a0a"></div><svg class="a" style="left:42px;top:200.0px" width="60" height="60" viewBox="42 200.0 60 60"><path d="M46.5,237.0 L97.5,223.0" stroke="#000" stroke-width="5.5" stroke-linecap="round"/></svg><div class="a" style="left:114px;top:214.0px;font-size:25px;line-height:30px;color:#a8a8a8">(Curve)</div><div class="a" style="left:436px;top:217.0px;width:26px;height:25px;background:#2b2b2b;border-radius:5px;box-shadow:0 0 0 1.5px #1e1e1e, 0 1px 0 1.5px #444"></div><svg class="a" style="left:436px;top:217.0px" width="26" height="25" viewBox="0 0 26 25"><path d="M6.5,13 L11,18.5 L19.5,6" stroke="#fff" stroke-width="2.4" fill="none"/></svg><div class="a" style="left:0;top:264.0px;width:498px;height:64px;background:#383838"></div><div class="a" style="left:0;top:328.0px;width:498px;height:2px;background:#282828"></div><div class="a" style="left:42px;top:266.0px;width:60px;height:60px;background:#262626;border:2.5px solid #0a0a0a"></div><svg class="a" style="left:42px;top:266.0px" width="60" height="60" viewBox="42 266.0 60 60"><path d="M46.5,303.7 L97.5,288.3" stroke="#000" stroke-width="5.5" stroke-linecap="round"/></svg><div class="a" style="left:114px;top:280.0px;font-size:25px;line-height:30px;color:#a8a8a8">(Curve)</div><div class="a" style="left:436px;top:283.0px;width:26px;height:25px;background:#2b2b2b;border-radius:5px;box-shadow:0 0 0 1.5px #1e1e1e, 0 1px 0 1.5px #444"></div><svg class="a" style="left:436px;top:283.0px" width="26" height="25" viewBox="0 0 26 25"><path d="M6.5,13 L11,18.5 L19.5,6" stroke="#fff" stroke-width="2.4" fill="none"/></svg><div class="a" style="left:0;top:330.0px;width:498px;height:64px;background:#383838"></div><div class="a" style="left:0;top:394.0px;width:498px;height:2px;background:#282828"></div><div class="a" style="left:42px;top:332.0px;width:60px;height:60px;background:#262626;border:2.5px solid #0a0a0a"></div><svg class="a" style="left:42px;top:332.0px" width="60" height="60" viewBox="42 332.0 60 60"><path d="M46.5,370.4 L97.5,353.6" stroke="#000" stroke-width="5.5" stroke-linecap="round"/></svg><div class="a" style="left:114px;top:346.0px;font-size:25px;line-height:30px;color:#a8a8a8">(Curve)</div><div class="a" style="left:436px;top:349.0px;width:26px;height:25px;background:#2b2b2b;border-radius:5px;box-shadow:0 0 0 1.5px #1e1e1e, 0 1px 0 1.5px #444"></div><svg class="a" style="left:436px;top:349.0px" width="26" height="25" viewBox="0 0 26 25"><path d="M6.5,13 L11,18.5 L19.5,6" stroke="#fff" stroke-width="2.4" fill="none"/></svg><div class="a" style="left:0;top:396.0px;width:498px;height:64px;background:#383838"></div><div class="a" style="left:0;top:460.0px;width:498px;height:2px;background:#282828"></div><div class="a" style="left:42px;top:398.0px;width:60px;height:60px;background:#262626;border:2.5px solid #0a0a0a"></div><svg class="a" style="left:42px;top:398.0px" width="60" height="60" viewBox="42 398.0 60 60"><path d="M46.5,437.1 L97.5,418.9" stroke="#000" stroke-width="5.5" stroke-linecap="round"/></svg><div class="a" style="left:114px;top:412.0px;font-size:25px;line-height:30px;color:#a8a8a8">(Curve)</div><div class="a" style="left:436px;top:415.0px;width:26px;height:25px;background:#2b2b2b;border-radius:5px;box-shadow:0 0 0 1.5px #1e1e1e, 0 1px 0 1.5px #444"></div><svg class="a" style="left:436px;top:415.0px" width="26" height="25" viewBox="0 0 26 25"><path d="M6.5,13 L11,18.5 L19.5,6" stroke="#fff" stroke-width="2.4" fill="none"/></svg><div class="a" style="left:0;top:462.0px;width:498px;height:64px;background:#383838"></div><div class="a" style="left:0;top:526.0px;width:498px;height:2px;background:#282828"></div><div class="a" style="left:42px;top:464.0px;width:60px;height:60px;background:#262626;border:2.5px solid #0a0a0a"></div><svg class="a" style="left:42px;top:464.0px" width="60" height="60" viewBox="42 464.0 60 60"><path d="M46.5,503.8 L97.5,484.2" stroke="#000" stroke-width="5.5" stroke-linecap="round"/></svg><div class="a" style="left:114px;top:478.0px;font-size:25px;line-height:30px;color:#a8a8a8">(Curve)</div><div class="a" style="left:436px;top:481.0px;width:26px;height:25px;background:#2b2b2b;border-radius:5px;box-shadow:0 0 0 1.5px #1e1e1e, 0 1px 0 1.5px #444"></div><svg class="a" style="left:436px;top:481.0px" width="26" height="25" viewBox="0 0 26 25"><path d="M6.5,13 L11,18.5 L19.5,6" stroke="#fff" stroke-width="2.4" fill="none"/></svg><div class="a" style="left:0;top:528.0px;width:498px;height:64px;background:#5b7ea6"></div><div class="a" style="left:0;top:592.0px;width:498px;height:2px;background:#282828"></div><div class="a" style="left:42px;top:530.0px;width:60px;height:60px;background:#262626;border:2.5px solid #0a0a0a"></div><svg class="a" style="left:42px;top:530.0px" width="60" height="60" viewBox="42 530.0 60 60"><path d="M46.5,570.6 L97.5,549.4" stroke="#000" stroke-width="2.8" stroke-linecap="round"/></svg><div class="a" style="left:114px;top:544.0px;font-size:25px;line-height:30px;color:#c6d3e2">(Curve)</div><div class="a" style="left:436px;top:547.0px;width:26px;height:25px;background:#2b2b2b;border-radius:5px;box-shadow:0 0 0 1.5px #1e1e1e, 0 1px 0 1.5px #4a6a90"></div><svg class="a" style="left:436px;top:547.0px" width="26" height="25" viewBox="0 0 26 25"><path d="M6.5,13 L11,18.5 L19.5,6" stroke="#fff" stroke-width="2.4" fill="none"/></svg><div class="a" style="left:0;top:594.0px;width:498px;height:64px;background:#5b7ea6"></div><div class="a" style="left:0;top:658.0px;width:498px;height:2px;background:#282828"></div><div class="a" style="left:42px;top:596.0px;width:60px;height:60px;background:#262626;border:2.5px solid #0a0a0a"></div><svg class="a" style="left:42px;top:596.0px" width="60" height="60" viewBox="42 596.0 60 60"><path d="M46.5,637.3 L97.5,614.7" stroke="#000" stroke-width="2.8" stroke-linecap="round"/></svg><div class="a" style="left:114px;top:610.0px;font-size:25px;line-height:30px;color:#c6d3e2">(Curve)</div><div class="a" style="left:436px;top:613.0px;width:26px;height:25px;background:#2b2b2b;border-radius:5px;box-shadow:0 0 0 1.5px #1e1e1e, 0 1px 0 1.5px #4a6a90"></div><svg class="a" style="left:436px;top:613.0px" width="26" height="25" viewBox="0 0 26 25"><path d="M6.5,13 L11,18.5 L19.5,6" stroke="#fff" stroke-width="2.4" fill="none"/></svg><div class="a" style="left:0;top:660.0px;width:498px;height:64px;background:#383838"></div><div class="a" style="left:0;top:724.0px;width:498px;height:2px;background:#282828"></div><div class="a" style="left:42px;top:662.0px;width:60px;height:60px;background:#262626;border:2.5px solid #0a0a0a"></div><svg class="a" style="left:42px;top:662.0px" width="60" height="60" viewBox="42 662.0 60 60"><path d="M46.5,704.0 L97.5,680.0" stroke="#000" stroke-width="5.5" stroke-linecap="round"/></svg><div class="a" style="left:114px;top:676.0px;font-size:25px;line-height:30px;color:#a8a8a8">(Curve)</div><div class="a" style="left:436px;top:679.0px;width:26px;height:25px;background:#2b2b2b;border-radius:5px;box-shadow:0 0 0 1.5px #1e1e1e, 0 1px 0 1.5px #444"></div><svg class="a" style="left:436px;top:679.0px" width="26" height="25" viewBox="0 0 26 25"><path d="M6.5,13 L11,18.5 L19.5,6" stroke="#fff" stroke-width="2.4" fill="none"/></svg><div class="a" style="left:0;top:726.0px;width:498px;height:64px;background:#383838"></div><div class="a" style="left:0;top:790.0px;width:498px;height:2px;background:#282828"></div><div class="a" style="left:42px;top:728.0px;width:60px;height:60px;background:#262626;border:2.5px solid #0a0a0a"></div><svg class="a" style="left:42px;top:728.0px" width="60" height="60" viewBox="42 728.0 60 60"><path d="M46.5,770.7 L97.5,745.3" stroke="#000" stroke-width="5.5" stroke-linecap="round"/></svg><div class="a" style="left:114px;top:742.0px;font-size:25px;line-height:30px;color:#a8a8a8">(Curve)</div><div class="a" style="left:436px;top:745.0px;width:26px;height:25px;background:#2b2b2b;border-radius:5px;box-shadow:0 0 0 1.5px #1e1e1e, 0 1px 0 1.5px #444"></div><svg class="a" style="left:436px;top:745.0px" width="26" height="25" viewBox="0 0 26 25"><path d="M6.5,13 L11,18.5 L19.5,6" stroke="#fff" stroke-width="2.4" fill="none"/></svg><div class="a" style="left:0;top:792.0px;width:498px;height:64px;background:#383838"></div><div class="a" style="left:0;top:856.0px;width:498px;height:2px;background:#282828"></div><div class="a" style="left:42px;top:794.0px;width:60px;height:60px;background:#262626;border:2.5px solid #0a0a0a"></div><svg class="a" style="left:42px;top:794.0px" width="60" height="60" viewBox="42 794.0 60 60"><path d="M46.5,837.4 L97.5,810.6" stroke="#000" stroke-width="5.5" stroke-linecap="round"/></svg><div class="a" style="left:114px;top:808.0px;font-size:25px;line-height:30px;color:#a8a8a8">(Curve)</div><div class="a" style="left:436px;top:811.0px;width:26px;height:25px;background:#2b2b2b;border-radius:5px;box-shadow:0 0 0 1.5px #1e1e1e, 0 1px 0 1.5px #444"></div><svg class="a" style="left:436px;top:811.0px" width="26" height="25" viewBox="0 0 26 25"><path d="M6.5,13 L11,18.5 L19.5,6" stroke="#fff" stroke-width="2.4" fill="none"/></svg><div class="a" style="left:0;top:858.0px;width:498px;height:64px;background:#5b7ea6"></div><div class="a" style="left:0;top:922.0px;width:498px;height:2px;background:#282828"></div><div class="a" style="left:42px;top:860.0px;width:60px;height:60px;background:#262626;border:2.5px solid #0a0a0a"></div><svg class="a" style="left:42px;top:860.0px" width="60" height="60" viewBox="42 860.0 60 60"><path d="M46.5,904.1 L97.5,875.9" stroke="#000" stroke-width="2.8" stroke-linecap="round"/></svg><div class="a" style="left:114px;top:874.0px;font-size:25px;line-height:30px;color:#c6d3e2">(Curve)</div><div class="a" style="left:436px;top:877.0px;width:26px;height:25px;background:#2b2b2b;border-radius:5px;box-shadow:0 0 0 1.5px #1e1e1e, 0 1px 0 1.5px #4a6a90"></div><svg class="a" style="left:436px;top:877.0px" width="26" height="25" viewBox="0 0 26 25"><path d="M6.5,13 L11,18.5 L19.5,6" stroke="#fff" stroke-width="2.4" fill="none"/></svg><div class="a" style="left:0;top:924.0px;width:498px;height:64px;background:#383838"></div><div class="a" style="left:0;top:988.0px;width:498px;height:2px;background:#282828"></div><div class="a" style="left:42px;top:926.0px;width:60px;height:60px;background:#262626;border:2.5px solid #0a0a0a"></div><svg class="a" style="left:42px;top:926.0px" width="60" height="60" viewBox="42 926.0 60 60"><path d="M46.5,970.8 L97.5,941.2" stroke="#000" stroke-width="5.5" stroke-linecap="round"/></svg><div class="a" style="left:114px;top:940.0px;font-size:25px;line-height:30px;color:#a8a8a8">(Curve)</div><div class="a" style="left:436px;top:943.0px;width:26px;height:25px;background:#2b2b2b;border-radius:5px;box-shadow:0 0 0 1.5px #1e1e1e, 0 1px 0 1.5px #444"></div><svg class="a" style="left:436px;top:943.0px" width="26" height="25" viewBox="0 0 26 25"><path d="M6.5,13 L11,18.5 L19.5,6" stroke="#fff" stroke-width="2.4" fill="none"/></svg><div class="a" style="left:0;top:990.0px;width:498px;height:64px;background:#5b7ea6"></div><div class="a" style="left:0;top:1054.0px;width:498px;height:2px;background:#282828"></div><div class="a" style="left:42px;top:992.0px;width:60px;height:60px;background:#262626;border:2.5px solid #0a0a0a"></div><svg class="a" style="left:42px;top:992.0px" width="60" height="60" viewBox="42 992.0 60 60"><path d="M46.5,1037.6 L97.5,1006.4" stroke="#000" stroke-width="2.8" stroke-linecap="round"/></svg><div class="a" style="left:114px;top:1006.0px;font-size:25px;line-height:30px;color:#c6d3e2">(Curve)</div><div class="a" style="left:436px;top:1009.0px;width:26px;height:25px;background:#2b2b2b;border-radius:5px;box-shadow:0 0 0 1.5px #1e1e1e, 0 1px 0 1.5px #4a6a90"></div><svg class="a" style="left:436px;top:1009.0px" width="26" height="25" viewBox="0 0 26 25"><path d="M6.5,13 L11,18.5 L19.5,6" stroke="#fff" stroke-width="2.4" fill="none"/></svg><div class="a" style="left:0;top:1056.0px;width:498px;height:64px;background:#383838"></div><div class="a" style="left:0;top:1120.0px;width:498px;height:2px;background:#282828"></div><div class="a" style="left:42px;top:1058.0px;width:60px;height:60px;background:#262626;border:2.5px solid #0a0a0a"></div><svg class="a" style="left:42px;top:1058.0px" width="60" height="60" viewBox="42 1058.0 60 60"><path d="M46.5,1104.3 L97.5,1071.7" stroke="#000" stroke-width="5.5" stroke-linecap="round"/></svg><div class="a" style="left:114px;top:1072.0px;font-size:25px;line-height:30px;color:#a8a8a8">(Curve)</div><div class="a" style="left:436px;top:1075.0px;width:26px;height:25px;background:#2b2b2b;border-radius:5px;box-shadow:0 0 0 1.5px #1e1e1e, 0 1px 0 1.5px #444"></div><svg class="a" style="left:436px;top:1075.0px" width="26" height="25" viewBox="0 0 26 25"><path d="M6.5,13 L11,18.5 L19.5,6" stroke="#fff" stroke-width="2.4" fill="none"/></svg><div class="a" style="left:0;top:1122.0px;width:498px;height:64px;background:#383838"></div><div class="a" style="left:0;top:1186.0px;width:498px;height:2px;background:#282828"></div><div class="a" style="left:42px;top:1124.0px;width:60px;height:60px;background:#262626;border:2.5px solid #0a0a0a"></div><svg class="a" style="left:42px;top:1124.0px" width="60" height="60" viewBox="42 1124.0 60 60"><path d="M46.5,1171.0 L97.5,1137.0" stroke="#000" stroke-width="5.5" stroke-linecap="round"/></svg><div class="a" style="left:114px;top:1138.0px;font-size:25px;line-height:30px;color:#a8a8a8">(Curve)</div><div class="a" style="left:436px;top:1141.0px;width:26px;height:25px;background:#2b2b2b;border-radius:5px;box-shadow:0 0 0 1.5px #1e1e1e, 0 1px 0 1.5px #444"></div><svg class="a" style="left:436px;top:1141.0px" width="26" height="25" viewBox="0 0 26 25"><path d="M6.5,13 L11,18.5 L19.5,6" stroke="#fff" stroke-width="2.4" fill="none"/></svg>
<div class="a" style="left:498px;top:0;width:29px;height:1170px;background:#333"></div>
<div class="a" style="left:507px;top:699px;width:14px;height:36px;background:#585858;border-radius:7px"></div>
</div>
<div class="a" style="left:2664px;top:1988px;width:527px;height:46px;background:#3b3b3b;box-shadow:inset 0 1.5px 0 #2a2a2a"></div>
<div class="a" style="left:2673px;top:1992px;width:42px;height:39px;background:#333"></div>
<svg class="i" style="left:2664px;top:1988px" width="527" height="46" viewBox="2664 1988 527 46"><path d="M2680,2003 l14,-6 l14,6 l-14,6 Z" fill="#bbb"/><path d="M2680,2010 l14,6 l14,-6 M2680,2017 l14,6 l14,-6" stroke="#bbb" stroke-width="2.5" fill="none"/><rect x="2830" y="2000" width="28" height="24" fill="#b8b8b8"/><circle cx="2844" cy="2012" r="7.5" fill="#3b3b3b"/><circle cx="2890" cy="2012" r="11" fill="none" stroke="#b8b8b8" stroke-width="2"/><path d="M2895,2002 A11,11 0 0 0 2885,2022 Z" fill="#b8b8b8"/><text x="2918" y="2022" font-family="Liberation Serif" font-style="italic" font-size="28" fill="#b8b8b8">fx</text><path d="M3065,2000 h12 l7,7 v17 h-19 Z M3077,2000 v7 h7" stroke="#b8b8b8" stroke-width="1.8" fill="none"/><rect x="3110" y="2002" width="5" height="5" fill="#b8b8b8"/><rect x="3120" y="2002" width="5" height="5" fill="#b8b8b8"/><rect x="3115" y="2007" width="5" height="5" fill="#b8b8b8"/><rect x="3125" y="2007" width="5" height="5" fill="#b8b8b8"/><rect x="3110" y="2012" width="5" height="5" fill="#b8b8b8"/><rect x="3120" y="2012" width="5" height="5" fill="#b8b8b8"/><rect x="3115" y="2017" width="5" height="5" fill="#b8b8b8"/><rect x="3125" y="2017" width="5" height="5" fill="#b8b8b8"/><rect x="3110" y="2002" width="20" height="20" fill="none" stroke="#b8b8b8" stroke-width="1"/><path d="M3155,2004 h20 M3162,2004 v-3 h6 v3" stroke="#b8b8b8" stroke-width="2" fill="none"/><path d="M3157,2007 h16 l-1.5,17 h-13 Z" fill="#b8b8b8"/><path d="M3162,2010 v11 M3165,2010 v11 M3168,2010 v11" stroke="#3b3b3b" stroke-width="1.4"/></svg>
<div class="a" style="left:2664px;top:2034px;width:527px;height:4px;background:#262626"></div><div class="a" style="left:2664px;top:2038px;width:527px;height:44px;background:#2c2c2c"></div>
<div class="a" style="left:2664px;top:2080.5px;width:527px;height:1.5px;background:#222"></div>
<div class="a" style="left:2702px;top:2042px;width:128px;height:40px;background:#3d3d3d"></div>
<div class="a" style="left:2678px;top:2052.0px;width:2px;height:15px;background:#555"></div><div class="a" style="left:2685px;top:2052.0px;width:2px;height:15px;background:#555"></div>
<div class="a" style="left:2708.5px;top:2048.5px;font-size:25px;line-height:30px;color:#ececec;white-space:nowrap">Transform</div>
<div class="a" style="left:2840.5px;top:2048.5px;font-size:25px;line-height:30px;color:#8c8c8c;white-space:nowrap">History</div>
<div class="a" style="left:2939px;top:2048.5px;font-size:25px;line-height:30px;color:#8c8c8c;white-space:nowrap">Navigator</div>
<div class="a" style="left:2929px;top:2050.0px;width:2px;height:20px;background:#5a5a5a"></div>
<div class="a" style="left:2664px;top:2082px;width:527px;height:200px;background:#3e3e3e"></div>
<svg class="i" style="left:2664px;top:2082px" width="527" height="200" viewBox="2664 2082 527 200"><rect x="2703" y="2127.2" width="68" height="67.4" fill="#666"/><rect x="2699" y="2123" width="10.8" height="10.8" fill="#535353"/><rect x="2699" y="2155.6" width="10.8" height="10.8" fill="#535353"/><rect x="2699" y="2188" width="10.8" height="10.8" fill="#535353"/><rect x="2731.7" y="2123" width="10.8" height="10.8" fill="#535353"/><rect x="2731.7" y="2155.6" width="10.8" height="10.8" fill="#535353"/><rect x="2731.7" y="2188" width="10.8" height="10.8" fill="#535353"/><rect x="2764.2" y="2123" width="10.8" height="10.8" fill="#535353"/><rect x="2764.2" y="2155.6" width="10.8" height="10.8" fill="#535353"/><rect x="2764.2" y="2188" width="10.8" height="10.8" fill="#535353"/><rect x="2699" y="2123" width="76" height="76" fill="none"/><rect x="2839" y="2103" width="118" height="36" rx="5" fill="#2e2e2e" stroke="#262626" stroke-width="1.5"/><text x="2809" y="2136" font-family="Liberation Sans" font-size="24.5" fill="#e8e8e8">X:</text><text x="2845" y="2133" font-family="Liberation Sans" font-size="24.5" fill="#8a8a8a">0 mm</text><rect x="3006" y="2103" width="118" height="36" rx="5" fill="#2e2e2e" stroke="#262626" stroke-width="1.5"/><text x="2971" y="2136" font-family="Liberation Sans" font-size="24.5" fill="#e8e8e8">W:</text><text x="3012" y="2133" font-family="Liberation Sans" font-size="24.5" fill="#8a8a8a">0 mm</text><rect x="2839" y="2147" width="118" height="36" rx="5" fill="#2e2e2e" stroke="#262626" stroke-width="1.5"/><text x="2811" y="2180" font-family="Liberation Sans" font-size="24.5" fill="#e8e8e8">Y:</text><text x="2845" y="2177" font-family="Liberation Sans" font-size="24.5" fill="#8a8a8a">0 mm</text><rect x="3006" y="2147" width="118" height="36" rx="5" fill="#2e2e2e" stroke="#262626" stroke-width="1.5"/><text x="2975" y="2180" font-family="Liberation Sans" font-size="24.5" fill="#e8e8e8">H:</text><text x="3012" y="2177" font-family="Liberation Sans" font-size="24.5" fill="#8a8a8a">0 mm</text><rect x="2839" y="2210" width="118" height="38" rx="5" fill="#2e2e2e" stroke="#262626" stroke-width="1.5"/><text x="2810" y="2243" font-family="Liberation Sans" font-size="24.5" fill="#e8e8e8">R:</text><text x="2845" y="2240" font-family="Liberation Sans" font-size="24.5" fill="#8a8a8a">0 °</text><path d="M2939,2225 h10 l-5,8 Z" fill="#9a9a9a"/><rect x="3006" y="2210" width="118" height="38" rx="5" fill="#2e2e2e" stroke="#262626" stroke-width="1.5"/><text x="2978" y="2243" font-family="Liberation Sans" font-size="24.5" fill="#e8e8e8">S:</text><text x="3012" y="2240" font-family="Liberation Sans" font-size="24.5" fill="#8a8a8a">0 °</text><path d="M3106,2225 h10 l-5,8 Z" fill="#9a9a9a"/><rect x="3148" y="2131" width="8" height="12" rx="4" fill="none" stroke="#9a9a9a" stroke-width="1.8"/><rect x="3148" y="2146" width="8" height="12" rx="4" fill="none" stroke="#9a9a9a" stroke-width="1.8"/><path d="M3152,2140 v10" stroke="#9a9a9a" stroke-width="1.8"/></svg><div class="a" style="left:113px;top:2282px;width:3078px;height:40px;overflow:hidden"><div class="a st" style="left:39.0px"><b>Click</b> an object to select it.</div><div class="a st" style="left:351.5px"><b>Click</b><span class="pl">+</span><svg width="22" height="20" viewBox="0 0 22 20" style="vertical-align:-1px;margin:0 1px"><path d="M11,1.8 L20,10.5 L15,10.5 L15,17.5 L7,17.5 L7,10.5 L2,10.5 Z" stroke="#fff" stroke-width="2.6" fill="none" stroke-linejoin="round"/></svg> to add to selection.</div><div class="a st" style="left:683.3px"><b>Drag</b> to marquee select nodes.</div><div class="a st" style="left:1041.2px"><b>Drag</b><span class="pl">+</span><svg width="22" height="20" viewBox="0 0 22 20" style="vertical-align:-1px;margin:0 1px"><path d="M1,4 H7.5 L14.5,17 H21 M13,4 H21" stroke="#fff" stroke-width="2.8" fill="none"/></svg> to begin lasso node selection.</div><div class="a st" style="left:1488.2px"><b>Click</b><span class="pl">+</span><svg width="22" height="20" viewBox="0 0 22 20" style="vertical-align:-1px;margin:0 1px"><path d="M1,4 H7.5 L14.5,17 H21 M13,4 H21" stroke="#fff" stroke-width="2.8" fill="none"/></svg> to begin polygon node selection.</div><div class="a st" style="left:1970.3px"><b>Drag</b><span class="pl">+</span><svg width="22" height="20" viewBox="0 0 22 20" style="vertical-align:-1px;margin:0 1px"><path d="M11,1.8 L20,10.5 L15,10.5 L15,17.5 L7,17.5 L7,10.5 L2,10.5 Z" stroke="#fff" stroke-width="2.6" fill="none" stroke-linejoin="round"/></svg> to add nodes to selection.</div><div class="a st" style="left:2375.6px"><b>Drag</b><span class="pl">+</span><svg width="19" height="20" viewBox="0 0 19 20" style="vertical-align:-1px;margin:0 1px"><path d="M2.5,12 L9.5,4 L16.5,12" stroke="#fff" stroke-width="3" fill="none" stroke-linecap="round"/></svg> to remove nodes from selection.</div><div class="a st" style="left:2848.7px"><b>Drag</b><span class="pl">+</span><svg width="22" height="20" viewBox="0 0 22 20" style="vertical-align:-1px;margin:0 1px"><path d="M11,1.8 L20,10.5 L15,10.5 L15,17.5 L7,17.5 L7,10.5 L2,10.5 Z" stroke="#fff" stroke-width="2.6" fill="none" stroke-linejoin="round"/></svg><span class="pl">+</span><svg width="19" height="20" viewBox="0 0 19 20" style="vertical-align:-1px;margin:0 1px"><path d="M2.5,12 L9.5,4 L16.5,12" stroke="#fff" stroke-width="3" fill="none" stroke-linecap="round"/></svg> to toggle node selection.</div></div>
<svg class="a" style="left:232px;top:286px" width="2404" height="1972" viewBox="232 286 2404 1972">
<defs>
<clipPath id="cE4"><ellipse cx="1693" cy="1530.3" rx="513.3" ry="439.8" /></clipPath><clipPath id="cE1"><ellipse cx="1396.3" cy="1008.6" rx="513.3" ry="439.8" /></clipPath>
<mask id="mN" maskUnits="userSpaceOnUse" x="232" y="286" width="2404" height="1972"><rect x="232" y="286" width="2404" height="1972" fill="#fff"/><ellipse cx="1176" cy="1530.3" rx="513.3" ry="439.8" fill="#000"/><ellipse cx="1817.5" cy="1700.3" rx="513.3" ry="439.8" fill="#000"/></mask>
</defs>
<rect x="232" y="286" width="2404" height="1972" fill="#fff"/>
<ellipse cx="1396.3" cy="1008.6" rx="513.3" ry="439.8" fill="#ebebeb"/>
<ellipse cx="1913.5" cy="1008.6" rx="513.3" ry="439.8" fill="#ebebeb"/>
<ellipse cx="1176" cy="1530.3" rx="513.3" ry="439.8" fill="#ebebeb"/>
<ellipse cx="1693" cy="1530.3" rx="513.3" ry="439.8" fill="#ebebeb"/>
<ellipse cx="1817.5" cy="1700.3" rx="513.3" ry="439.8" fill="#ebebeb"/>
<ellipse cx="1913.5" cy="1599" rx="513.3" ry="439.8" fill="#ebebeb"/>
<ellipse cx="2335.5" cy="1700.3" rx="513.3" ry="439.8" fill="#ebebeb"/>
<ellipse cx="1693" cy="2120.3" rx="513.3" ry="439.8" fill="#ebebeb"/>
<ellipse cx="2335.5" cy="2290" rx="513.3" ry="439.8" fill="#ebebeb"/>
<g clip-path="url(#cE4)"><g clip-path="url(#cE1)"><rect x="232" y="286" width="2404" height="1972" fill="#fff" mask="url(#mN)"/></g></g>
<ellipse cx="1396.3" cy="1008.6" rx="513.3" ry="439.8" fill="none" stroke="#000" stroke-width="1.6"/>
<ellipse cx="1913.5" cy="1008.6" rx="513.3" ry="439.8" fill="none" stroke="#000" stroke-width="1.6"/>
<ellipse cx="1176" cy="1530.3" rx="513.3" ry="439.8" fill="none" stroke="#000" stroke-width="1.6"/>
<ellipse cx="1693" cy="1530.3" rx="513.3" ry="439.8" fill="none" stroke="#000" stroke-width="1.6"/>
<ellipse cx="1817.5" cy="1700.3" rx="513.3" ry="439.8" fill="none" stroke="#000" stroke-width="1.6"/>
<ellipse cx="1913.5" cy="1599" rx="513.3" ry="439.8" fill="none" stroke="#000" stroke-width="1.6"/>
<ellipse cx="2335.5" cy="1700.3" rx="513.3" ry="439.8" fill="none" stroke="#000" stroke-width="1.6"/>
<ellipse cx="1693" cy="2120.3" rx="513.3" ry="439.8" fill="none" stroke="#000" stroke-width="1.6"/>
<ellipse cx="2335.5" cy="2290" rx="513.3" ry="439.8" fill="none" stroke="#000" stroke-width="1.6"/>
<path d="M1203.5,1030.0 A589.6,589.6 0 0 1 1660.4,1003.9 L1646.8,1040.2 A563.1,563.1 0 0 0 1352.6,1141.9 A390.1,390.1 0 0 0 1203.5,1030.0 Z" fill="#ebebeb" stroke="none"/><path d="M1203.5,1030.0 A589.6,589.6 0 0 1 1660.4,1003.9 L1646.8,1040.2 A546.4,546.4 0 0 0 1339.0,1152.8 M1203.5,1030.0 A390.1,390.1 0 0 1 1352.6,1141.9" fill="none" stroke="#000" stroke-width="1.7" stroke-linejoin="miter"/>
<path d="M2472.9,1124.9 A497.5,497.5 0 0 1 2660.0,1038.0 L2660.0,1124.0 A525.1,525.1 0 0 0 2500.5,1159.4 Z" fill="#ebebeb" stroke="#000" stroke-width="1.6"/>
<path d="M1330.0,1219.4 L1346.8,1205.6 L1363.5,1193.1 L1380.2,1181.6 L1397.0,1171.0 L1413.8,1161.3 L1430.5,1152.4 L1447.2,1144.2 L1464.0,1136.7 L1480.8,1129.9 L1497.5,1123.6 L1514.2,1118.0 L1531.0,1113.0 L1547.8,1108.5 L1564.5,1104.5 L1581.2,1101.0 L1598.0,1098.1 L1614.8,1095.6 L1631.5,1093.7 L1648.2,1092.2 L1665.0,1091.2 L1681.8,1090.6 L1698.5,1090.5 L1715.2,1090.9 L1732.0,1091.8 L1748.8,1093.1 L1765.5,1094.9 L1782.2,1097.2 L1799.0,1100.0 L1815.8,1103.3 L1832.5,1107.1 L1849.2,1111.4 L1866.0,1116.2 L1882.8,1121.7 L1899.5,1127.7 L1916.2,1134.3 L1933.0,1141.5 L1949.8,1149.5 L1966.5,1158.1 L1983.2,1167.6 L2000.0,1177.8" fill="none" stroke="#000" stroke-width="2.2"/>
<path d="M1583.0,1262.5 L1592.4,1255.9 L1601.8,1249.5 L1611.3,1243.5 L1620.7,1237.8 L1630.1,1232.3 L1639.5,1227.1 L1649.0,1222.1 L1658.4,1217.4 L1667.8,1212.8 L1677.2,1208.6 L1686.7,1204.5 L1696.1,1200.6 L1705.5,1196.9 L1715.0,1193.4 L1724.4,1190.1 L1733.8,1187.0 L1743.2,1184.1 L1752.7,1181.4 L1762.1,1178.8 L1771.5,1176.4 L1780.9,1174.1 L1790.3,1172.0 L1799.8,1170.1 L1809.2,1168.4 L1818.6,1166.8 L1828.0,1165.3 L1837.5,1164.1 L1846.9,1162.9 L1856.3,1161.9 L1865.8,1161.1 L1875.2,1160.4 L1884.6,1159.9 L1894.0,1159.5 L1903.5,1159.3 L1912.9,1159.2 L1922.3,1159.3 L1931.7,1159.5 L1941.2,1159.8 L1950.6,1160.3 L1960.0,1161.0" fill="none" stroke="#000" stroke-width="2.2"/>
<path d="M1588,1270 L1610.8,1297.8 L1566,1317" fill="none" stroke="#2f7fde" stroke-width="2"/>
<rect x="1532.7" y="1303.2" width="17.7" height="17.7" fill="#2f7fde" rx="1.5"/>
<rect x="1535.4" y="1302.9" width="15.2" height="15.2" fill="#fff" stroke="#2f7fde" stroke-width="2.5"/>
<rect x="1538.7" y="1307.2" width="17.7" height="17.7" fill="#2f7fde" rx="1.5"/>
<rect x="1541.4" y="1306.9" width="15.2" height="15.2" fill="#fff" stroke="#2f7fde" stroke-width="2.5"/>
<rect x="1543.2" y="1310.7" width="17.7" height="17.7" fill="#2f7fde" rx="1.5"/>
<rect x="1545.9" y="1310.4" width="15.2" height="15.2" fill="#fff" stroke="#2f7fde" stroke-width="2.5"/>
<rect x="1548.2" y="1315.2" width="17.7" height="17.7" fill="#2f7fde" rx="1.5"/>
<rect x="1550.9" y="1314.9" width="15.2" height="15.2" fill="#fff" stroke="#2f7fde" stroke-width="2.5"/>
<rect x="1528.2" y="1292.7" width="17.7" height="17.7" fill="#2f7fde" rx="1.5"/>
<rect x="1530.9" y="1292.4" width="15.2" height="15.2" fill="#fff" stroke="#2f7fde" stroke-width="2.5"/>
<rect x="1534.7" y="1287.2" width="17.7" height="17.7" fill="#2f7fde" rx="1.5"/>
<rect x="1537.4" y="1287.0" width="15.2" height="15.2" fill="#fff" stroke="#2f7fde" stroke-width="2.5"/>
<rect x="1541.2" y="1281.9" width="17.7" height="17.7" fill="#2f7fde" rx="1.5"/>
<rect x="1543.9" y="1281.6" width="15.2" height="15.2" fill="#fff" stroke="#2f7fde" stroke-width="2.5"/>
<rect x="1547.7" y="1276.5" width="17.7" height="17.7" fill="#2f7fde" rx="1.5"/>
<rect x="1550.4" y="1276.2" width="15.2" height="15.2" fill="#fff" stroke="#2f7fde" stroke-width="2.5"/>
<rect x="1554.2" y="1271.1" width="17.7" height="17.7" fill="#2f7fde" rx="1.5"/>
<rect x="1556.9" y="1270.8" width="15.2" height="15.2" fill="#fff" stroke="#2f7fde" stroke-width="2.5"/>
<rect x="1560.7" y="1265.7" width="17.7" height="17.7" fill="#2f7fde" rx="1.5"/>
<rect x="1563.4" y="1265.4" width="15.2" height="15.2" fill="#fff" stroke="#2f7fde" stroke-width="2.5"/>
<rect x="1567.2" y="1260.2" width="17.7" height="17.7" fill="#2f7fde" rx="1.5"/>
<rect x="1569.9" y="1260.0" width="15.2" height="15.2" fill="#fff" stroke="#2f7fde" stroke-width="2.5"/>
<rect x="1603.2" y="1290.2" width="15.2" height="15.2" fill="#fff" stroke="#2f7fde" stroke-width="2.5"/>
<rect x="1616.1" y="1227.9" width="15.2" height="15.2" fill="#fff" stroke="#2f7fde" stroke-width="2.5"/>
<rect x="1618.2" y="1226.8" width="15.2" height="15.2" fill="#fff" stroke="#2f7fde" stroke-width="2.5"/>
<rect x="1620.2" y="1225.7" width="15.2" height="15.2" fill="#fff" stroke="#2f7fde" stroke-width="2.5"/>
<rect x="1622.3" y="1224.5" width="15.2" height="15.2" fill="#fff" stroke="#2f7fde" stroke-width="2.5"/>
<rect x="1624.4" y="1223.4" width="15.2" height="15.2" fill="#fff" stroke="#2f7fde" stroke-width="2.5"/>
<rect x="1638.4" y="1213.4" width="15.2" height="15.2" fill="#fff" stroke="#2f7fde" stroke-width="2.5"/>
<rect x="1640.4" y="1212.4" width="15.2" height="15.2" fill="#fff" stroke="#2f7fde" stroke-width="2.5"/>
<rect x="1642.4" y="1211.4" width="15.2" height="15.2" fill="#fff" stroke="#2f7fde" stroke-width="2.5"/>
<rect x="1644.4" y="1210.4" width="15.2" height="15.2" fill="#fff" stroke="#2f7fde" stroke-width="2.5"/>
<rect x="1678.4" y="1197.4" width="15.2" height="15.2" fill="#fff" stroke="#2f7fde" stroke-width="2.5"/>
<rect x="1682.1" y="1195.7" width="15.2" height="15.2" fill="#fff" stroke="#2f7fde" stroke-width="2.5"/>
<rect x="1685.7" y="1194.1" width="15.2" height="15.2" fill="#fff" stroke="#2f7fde" stroke-width="2.5"/>
<rect x="1689.4" y="1192.4" width="15.2" height="15.2" fill="#fff" stroke="#2f7fde" stroke-width="2.5"/>
<rect x="1698.4" y="1189.4" width="15.2" height="15.2" fill="#fff" stroke="#2f7fde" stroke-width="2.5"/>
<rect x="1714.4" y="1182.4" width="15.2" height="15.2" fill="#fff" stroke="#2f7fde" stroke-width="2.5"/>
<rect x="1758.4" y="1170.4" width="15.2" height="15.2" fill="#fff" stroke="#2f7fde" stroke-width="2.5"/>
<rect x="1760.4" y="1170.1" width="15.2" height="15.2" fill="#fff" stroke="#2f7fde" stroke-width="2.5"/>
<rect x="1762.4" y="1169.7" width="15.2" height="15.2" fill="#fff" stroke="#2f7fde" stroke-width="2.5"/>
<rect x="1764.4" y="1169.4" width="15.2" height="15.2" fill="#fff" stroke="#2f7fde" stroke-width="2.5"/>
<rect x="1780.4" y="1164.9" width="15.2" height="15.2" fill="#fff" stroke="#2f7fde" stroke-width="2.5"/>
<rect x="1798.4" y="1160.4" width="15.2" height="15.2" fill="#fff" stroke="#2f7fde" stroke-width="2.5"/>
<rect x="1801.7" y="1159.9" width="15.2" height="15.2" fill="#fff" stroke="#2f7fde" stroke-width="2.5"/>
<rect x="1804.9" y="1159.5" width="15.2" height="15.2" fill="#fff" stroke="#2f7fde" stroke-width="2.5"/>
<rect x="1808.2" y="1159.0" width="15.2" height="15.2" fill="#fff" stroke="#2f7fde" stroke-width="2.5"/>
<rect x="1811.5" y="1158.6" width="15.2" height="15.2" fill="#fff" stroke="#2f7fde" stroke-width="2.5"/>
<rect x="1814.8" y="1158.1" width="15.2" height="15.2" fill="#fff" stroke="#2f7fde" stroke-width="2.5"/>
<rect x="1818.0" y="1157.7" width="15.2" height="15.2" fill="#fff" stroke="#2f7fde" stroke-width="2.5"/>
<rect x="1821.3" y="1157.2" width="15.2" height="15.2" fill="#fff" stroke="#2f7fde" stroke-width="2.5"/>
<rect x="1824.6" y="1156.8" width="15.2" height="15.2" fill="#fff" stroke="#2f7fde" stroke-width="2.5"/>
<rect x="1827.9" y="1156.3" width="15.2" height="15.2" fill="#fff" stroke="#2f7fde" stroke-width="2.5"/>
<rect x="1831.1" y="1155.9" width="15.2" height="15.2" fill="#fff" stroke="#2f7fde" stroke-width="2.5"/>
<rect x="1834.4" y="1155.4" width="15.2" height="15.2" fill="#fff" stroke="#2f7fde" stroke-width="2.5"/>
<rect x="1576.1" y="1255.3" width="15.2" height="15.2" fill="#fff" stroke="#e8141c" stroke-width="2.5"/>
<rect x="1634.1" y="1219.3" width="15.2" height="15.2" fill="#fff" stroke="#e8141c" stroke-width="2.5"/>
<rect x="1657.0" y="1207.2" width="15.2" height="15.2" fill="#fff" stroke="#e8141c" stroke-width="2.5"/>
<rect x="1707.1" y="1186.3" width="15.2" height="15.2" fill="#fff" stroke="#e8141c" stroke-width="2.5"/>
<rect x="1690.0" y="1193.1" width="15.2" height="15.2" fill="#fff" stroke="#e8141c" stroke-width="2.5"/>
<rect x="1771.0" y="1167.4" width="15.2" height="15.2" fill="#fff" stroke="#e8141c" stroke-width="2.5"/>
<rect x="1842.0" y="1155.4" width="15.2" height="15.2" fill="#fff" stroke="#e8141c" stroke-width="2.5"/>
</svg>
<div id="winb"></div>
</body></html>
